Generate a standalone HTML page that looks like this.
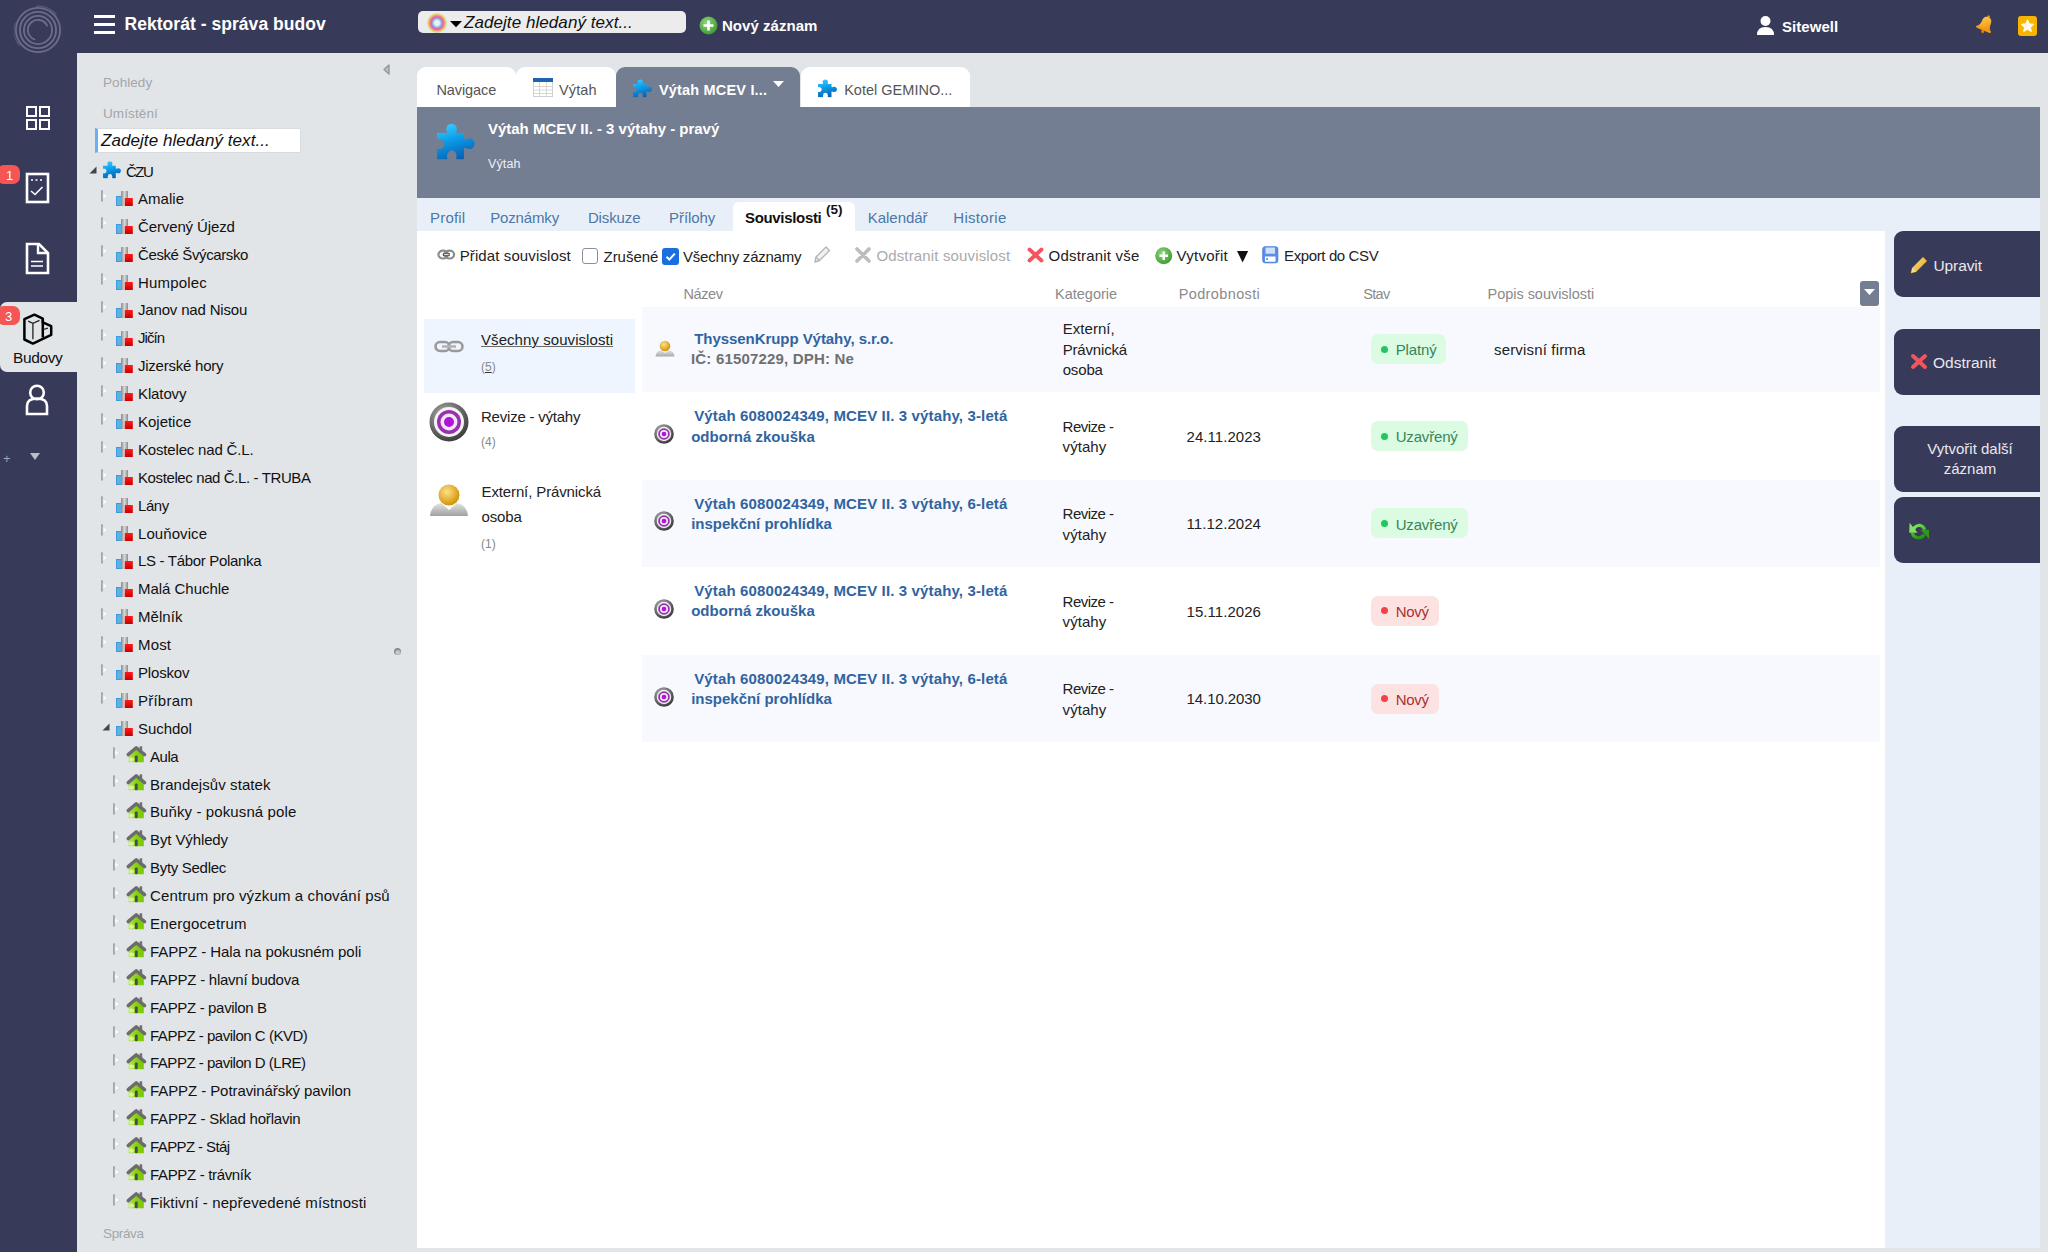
<!DOCTYPE html>
<html><head><meta charset="utf-8"><title>Rektorát - správa budov</title>
<style>
html,body{margin:0;padding:0;}
body{width:2048px;height:1252px;overflow:hidden;position:relative;font-family:"Liberation Sans", sans-serif;background:#e1e5e8;}
.b{position:absolute;}
.t{position:absolute;white-space:nowrap;line-height:1;font-family:"Liberation Sans", sans-serif;}
svg.b{overflow:visible;}
</style></head><body>
<div class="b" style="left:0px;top:0px;width:2048px;height:53px;background:#383a5a;"></div>
<div class="b" style="left:0px;top:53px;width:77px;height:1199px;background:#383a5a;"></div>
<div class="b" style="left:77px;top:53px;width:1971px;height:1199px;background:#e1e5e8;"></div>
<svg class="b" style="left:0px;top:0px;" width="76" height="53" viewBox="0 0 76 53"><circle cx="38" cy="30" r="22.1" fill="none" stroke="#6b6d8b" stroke-width="1.8"/><circle cx="38" cy="30" r="18.1" fill="none" stroke="#6b6d8b" stroke-width="1.8"/><circle cx="38" cy="30" r="14.1" fill="none" stroke="#6b6d8b" stroke-width="1.8"/><path d="M34.55 39.49 A10.1 10.1 0 1 1 47.15 25.73" fill="none" stroke="#6b6d8b" stroke-width="1.8" stroke-linecap="round"/><path d="M35.88 6.29 A24.3 24.3 0 0 1 56.61 14.88" fill="none" stroke="#6b6d8b" stroke-width="1.2" opacity="0.6"/><path d="M19.61 45.93 A24 24 0 0 1 15.45 22.29" fill="none" stroke="#6b6d8b" stroke-width="1.2" opacity="0.5"/></svg>
<div class="b" style="left:94px;top:15px;width:21px;height:3px;background:#fff;"></div>
<div class="b" style="left:94px;top:23px;width:21px;height:3px;background:#fff;"></div>
<div class="b" style="left:94px;top:31px;width:21px;height:3px;background:#fff;"></div>
<div class="t" style="left:124.5px;top:16.39px;font-size:17.5px;color:#fff;font-weight:bold;font-style:normal;letter-spacing:0.041px;">Rektorát - správa budov</div>
<div class="b" style="left:418px;top:11px;width:268px;height:22px;background:#ececec;border-radius:5px"></div>
<svg class="b" style="left:426px;top:12px;" width="22" height="22" viewBox="0 0 22 22"><defs><radialGradient id="rg" cx="11" cy="11" r="10.2" gradientUnits="userSpaceOnUse"><stop offset="0" stop-color="#f2f0ef"/><stop offset="0.25" stop-color="#e8eef4"/><stop offset="0.42" stop-color="#7ec0ea"/><stop offset="0.58" stop-color="#e060b0"/><stop offset="0.72" stop-color="#f08888"/><stop offset="0.85" stop-color="#f2d070"/><stop offset="0.95" stop-color="#c8e6a0"/><stop offset="1" stop-color="#c8e6a0" stop-opacity="0"/></radialGradient></defs><circle cx="11" cy="11" r="10.2" fill="url(#rg)"/></svg>
<svg class="b" style="left:449.5px;top:20.5px;" width="12" height="7" viewBox="0 0 12 7"><path d="M0 0 L12 0 L6 6.2 Z" fill="#000"/></svg>
<div class="t" style="left:464px;top:13.61px;font-size:17px;color:#111;font-weight:normal;font-style:italic;letter-spacing:0.066px;">Zadejte hledaný text...</div>
<svg class="b" style="left:699px;top:16px;" width="19" height="19" viewBox="0 0 19 19"><defs><radialGradient id="gg" cx="0.4" cy="0.35" r="0.7"><stop offset="0" stop-color="#8fd67a"/><stop offset="1" stop-color="#3a9a2c"/></radialGradient></defs><circle cx="9.5" cy="9.5" r="9" fill="url(#gg)"/><path d="M9.5 4.5v10M4.5 9.5h10" stroke="#fff" stroke-width="2.6"/></svg>
<div class="t" style="left:722px;top:18.30px;font-size:15px;color:#fff;font-weight:bold;font-style:normal;letter-spacing:0.031px;">Nový záznam</div>
<svg class="b" style="left:1757px;top:16px;" width="17" height="20" viewBox="0 0 17 20"><circle cx="8.5" cy="5" r="5" fill="#fff"/><path d="M0 19 Q0 11 8.5 11 Q17 11 17 19 Z" fill="#fff"/></svg>
<div class="t" style="left:1782px;top:19.30px;font-size:15px;color:#fff;font-weight:bold;font-style:normal;letter-spacing:0.045px;">Sitewell</div>
<svg class="b" style="left:1975px;top:13px;" width="21" height="23" viewBox="0 0 21 23"><defs><linearGradient id="bl" x1="0" y1="0" x2="1" y2="1"><stop offset="0" stop-color="#ffd35a"/><stop offset="1" stop-color="#f08a00"/></linearGradient></defs><g transform="rotate(22 10.5 11.5)"><circle cx="10.5" cy="3" r="1.3" fill="#e89400"/><path d="M10.5 3.6 C6.8 3.6 5.8 6.5 5.8 9.5 C5.8 12.5 4.8 14.5 3 16.2 H18 C16.2 14.5 15.2 12.5 15.2 9.5 C15.2 6.5 14.2 3.6 10.5 3.6 Z" fill="url(#bl)"/><rect x="2.5" y="15.6" width="16" height="2.2" rx="1.1" fill="#f39a10"/><circle cx="10.5" cy="19" r="1.5" fill="#e88a00"/></g></svg>
<svg class="b" style="left:2018px;top:16px;" width="20" height="20" viewBox="0 0 20 20"><rect x="0" y="0" width="19" height="20" rx="3" fill="#f7b500"/><path d="M9.5 4.2 L11.2 8 L15.3 8.4 L12.2 11.1 L13.1 15.2 L9.5 13 L5.9 15.2 L6.8 11.1 L3.7 8.4 L7.8 8 Z" fill="#fffbe8" stroke="#fffbe8" stroke-width="1.4" stroke-linejoin="round"/></svg>
<div class="b" style="left:25.5px;top:105.5px;width:7.5px;height:7.5px;border:2px solid #fff"></div>
<div class="b" style="left:38.5px;top:105.5px;width:7.5px;height:7.5px;border:2px solid #fff"></div>
<div class="b" style="left:25.5px;top:118.5px;width:7.5px;height:7.5px;border:2px solid #fff"></div>
<div class="b" style="left:38.5px;top:118.5px;width:7.5px;height:7.5px;border:2px solid #fff"></div>
<div class="b" style="left:-3px;top:165px;width:23px;height:19px;background:#f55555;border-radius:7px"></div>
<div class="t" style="left:6px;top:169.00px;font-size:13px;color:#fff;font-weight:normal;font-style:normal;">1</div>
<svg class="b" style="left:25px;top:172px;" width="26" height="33" viewBox="0 0 26 33"><rect x="2" y="2" width="21" height="28" fill="none" stroke="#fff" stroke-width="2.6"/><path d="M6 8h2M10.5 8h2M15 8h2" stroke="#fff" stroke-width="1.5"/><path d="M6 19 L10 22.5 L17.5 15" fill="none" stroke="#fff" stroke-width="1.6"/></svg>
<svg class="b" style="left:25px;top:242px;" width="26" height="34" viewBox="0 0 26 34"><path d="M2 2 H14 L23 11 V31 H2 Z" fill="none" stroke="#fff" stroke-width="2.6" stroke-linejoin="miter"/><path d="M13 3 V11 H22" fill="none" stroke="#fff" stroke-width="2.4"/><path d="M6 19.5 H18 M6 24 H18" stroke="#fff" stroke-width="1.4"/></svg>
<div class="b" style="left:0px;top:302px;width:77px;height:70px;background:#e1e5e8;border-radius:7px 0 0 7px"></div>
<div class="b" style="left:-3px;top:306px;width:23px;height:19px;background:#f55555;border-radius:7px"></div>
<div class="t" style="left:5px;top:310.00px;font-size:13px;color:#fff;font-weight:normal;font-style:normal;">3</div>
<svg class="b" style="left:18px;top:308px;" width="40" height="42" viewBox="0 0 40 42"><path d="M16.4 6.7 L6.4 11.1 V31.5 L14.9 35.6 L33.2 26.8 V18.1 L24.8 14.4 V10.7 Z" fill="none" stroke="#000" stroke-width="2.5" stroke-linejoin="round"/><path d="M24.8 10.7 V29.5" stroke="#000" stroke-width="2.5"/><path d="M10.1 13.1 L14.9 15.4 L21.5 12.4 M14.9 15.4 V31.2 M25.5 21.5 L29.9 20.1" fill="none" stroke="#222" stroke-width="1.3"/></svg>
<div class="t" style="left:13px;top:349.88px;font-size:15.5px;color:#111;font-weight:normal;font-style:normal;letter-spacing:-0.390px;">Budovy</div>
<svg class="b" style="left:25px;top:384px;" width="25" height="32" viewBox="0 0 25 32"><circle cx="12" cy="8.5" r="6.8" fill="none" stroke="#fff" stroke-width="2.6"/><path d="M2 30 V22 Q2 14.5 12 14.5 Q22 14.5 22 22 V30 Z" fill="none" stroke="#fff" stroke-width="2.6"/></svg>
<div class="t" style="left:3px;top:452.00px;font-size:13px;color:#9aa;font-weight:normal;font-style:normal;">+</div>
<svg class="b" style="left:30px;top:453px;" width="11" height="8" viewBox="0 0 11 8"><path d="M0 0 H10 L5 7 Z" fill="#b8c0c4"/></svg>
<svg class="b" style="left:383px;top:64px;" width="7" height="11" viewBox="0 0 7 11"><path d="M6 1 L1 5.5 L6 10 Z" fill="#b9c1c4" stroke="#8f9599" stroke-width="1.3" stroke-linejoin="round"/></svg>
<div class="t" style="left:103px;top:75.87px;font-size:13.5px;color:#a3a6a8;font-weight:normal;font-style:normal;letter-spacing:0.061px;">Pohledy</div>
<div class="t" style="left:103px;top:106.57px;font-size:13.5px;color:#a3a6a8;font-weight:normal;font-style:normal;letter-spacing:0.105px;">Umístění</div>
<div class="b" style="left:95px;top:128px;width:206px;height:25px;background:#fff;box-sizing:border-box;border:1px solid #d8dcdf;border-left:3px solid #6ab0f0"></div>
<div class="t" style="left:101px;top:132.11px;font-size:17px;color:#111;font-weight:normal;font-style:italic;letter-spacing:0.066px;">Zadejte hledaný text...</div>
<svg class="b" style="left:299px;top:398px;display:none" width="7" height="7" viewBox="0 0 7 7"><circle cx="3.5" cy="3.5" r="3.5" fill="#8a8c8c"/></svg>
<div class="b" style="left:394px;top:647.5px;width:7px;height:7px;border-radius:50%;background:radial-gradient(circle at 55% 65%, #c8caca 0 25%, #828484 60%)"></div>
<svg class="b" style="left:89px;top:165.5px;" width="8" height="8" viewBox="0 0 8 8"><path d="M7.5 0.5 V7.5 H0.5 Z" fill="#444"/></svg>
<svg class="b" style="left:103px;top:160.5px;" width="18" height="18" viewBox="0 0 37.5 36"><defs><linearGradient id="pzgczu" gradientUnits="userSpaceOnUse" x1="8" y1="2" x2="18" y2="36"><stop offset="0" stop-color="#36c6ff"/><stop offset="0.45" stop-color="#0a9ae6"/><stop offset="1" stop-color="#0a5fb0"/></linearGradient><mask id="pzmczu"><rect x="-2" y="-2" width="42" height="40" fill="#fff"/><circle cx="2.6" cy="20.2" r="4.7" fill="#000"/><rect x="-2" y="15.5" width="4.6" height="9.4" fill="#000"/><circle cx="14.6" cy="31" r="4.5" fill="#000"/><rect x="10.1" y="31" width="9" height="6" fill="#000"/></mask></defs><g mask="url(#pzmczu)" fill="url(#pzgczu)"><rect x="0" y="9" width="26.6" height="26"/><circle cx="14.4" cy="5.3" r="5.3"/><rect x="10.4" y="6" width="8" height="4"/><circle cx="31.9" cy="19.6" r="5.3"/><rect x="25" y="15.2" width="4" height="8.8"/></g></svg>
<div class="t" style="left:126px;top:164.00px;font-size:15px;color:#111;font-weight:normal;font-style:normal;letter-spacing:-1.498px;">ČZU</div>
<svg class="b" style="left:101px;top:189.6px;" width="8" height="12" viewBox="0 0 8 12"><rect x="0" y="0.3" width="1.9" height="11.2" fill="#a3a5a6"/><path d="M2 2.6 L6.8 5.9 L2 9.2 Z" fill="#fbfbfb" stroke="#d0d3d5" stroke-width="0.6" stroke-linejoin="round"/></svg>
<svg class="b" style="left:116px;top:191.1px;" width="17" height="15" viewBox="0 0 17 15"><defs><linearGradient id="gb" x1="0" x2="1"><stop offset="0" stop-color="#8a8a8a"/><stop offset="0.5" stop-color="#d8d8d8"/><stop offset="1" stop-color="#8a8a8a"/></linearGradient><linearGradient id="rb" x1="0" y1="0" x2="0" y2="1"><stop offset="0" stop-color="#ff1a1a"/><stop offset="1" stop-color="#c80000"/></linearGradient></defs><rect x="0" y="5" width="6" height="10" fill="#3d9be0"/><rect x="1" y="6" width="4" height="8" fill="#5fb0e0"/><rect x="5" y="0" width="7" height="15" fill="url(#gb)"/><rect x="8.8" y="7" width="8" height="8" fill="url(#rb)"/></svg>
<div class="t" style="left:138px;top:190.90px;font-size:15px;color:#111;font-weight:normal;font-style:normal;letter-spacing:0.039px;">Amalie</div>
<svg class="b" style="left:101px;top:217.49px;" width="8" height="12" viewBox="0 0 8 12"><rect x="0" y="0.3" width="1.9" height="11.2" fill="#a3a5a6"/><path d="M2 2.6 L6.8 5.9 L2 9.2 Z" fill="#fbfbfb" stroke="#d0d3d5" stroke-width="0.6" stroke-linejoin="round"/></svg>
<svg class="b" style="left:116px;top:218.99px;" width="17" height="15" viewBox="0 0 17 15"><defs><linearGradient id="gb" x1="0" x2="1"><stop offset="0" stop-color="#8a8a8a"/><stop offset="0.5" stop-color="#d8d8d8"/><stop offset="1" stop-color="#8a8a8a"/></linearGradient><linearGradient id="rb" x1="0" y1="0" x2="0" y2="1"><stop offset="0" stop-color="#ff1a1a"/><stop offset="1" stop-color="#c80000"/></linearGradient></defs><rect x="0" y="5" width="6" height="10" fill="#3d9be0"/><rect x="1" y="6" width="4" height="8" fill="#5fb0e0"/><rect x="5" y="0" width="7" height="15" fill="url(#gb)"/><rect x="8.8" y="7" width="8" height="8" fill="url(#rb)"/></svg>
<div class="t" style="left:138px;top:218.79px;font-size:15px;color:#111;font-weight:normal;font-style:normal;letter-spacing:-0.127px;">Červený Újezd</div>
<svg class="b" style="left:101px;top:245.38px;" width="8" height="12" viewBox="0 0 8 12"><rect x="0" y="0.3" width="1.9" height="11.2" fill="#a3a5a6"/><path d="M2 2.6 L6.8 5.9 L2 9.2 Z" fill="#fbfbfb" stroke="#d0d3d5" stroke-width="0.6" stroke-linejoin="round"/></svg>
<svg class="b" style="left:116px;top:246.88px;" width="17" height="15" viewBox="0 0 17 15"><defs><linearGradient id="gb" x1="0" x2="1"><stop offset="0" stop-color="#8a8a8a"/><stop offset="0.5" stop-color="#d8d8d8"/><stop offset="1" stop-color="#8a8a8a"/></linearGradient><linearGradient id="rb" x1="0" y1="0" x2="0" y2="1"><stop offset="0" stop-color="#ff1a1a"/><stop offset="1" stop-color="#c80000"/></linearGradient></defs><rect x="0" y="5" width="6" height="10" fill="#3d9be0"/><rect x="1" y="6" width="4" height="8" fill="#5fb0e0"/><rect x="5" y="0" width="7" height="15" fill="url(#gb)"/><rect x="8.8" y="7" width="8" height="8" fill="url(#rb)"/></svg>
<div class="t" style="left:138px;top:246.68px;font-size:15px;color:#111;font-weight:normal;font-style:normal;letter-spacing:-0.388px;">České Švýcarsko</div>
<svg class="b" style="left:101px;top:273.27px;" width="8" height="12" viewBox="0 0 8 12"><rect x="0" y="0.3" width="1.9" height="11.2" fill="#a3a5a6"/><path d="M2 2.6 L6.8 5.9 L2 9.2 Z" fill="#fbfbfb" stroke="#d0d3d5" stroke-width="0.6" stroke-linejoin="round"/></svg>
<svg class="b" style="left:116px;top:274.77px;" width="17" height="15" viewBox="0 0 17 15"><defs><linearGradient id="gb" x1="0" x2="1"><stop offset="0" stop-color="#8a8a8a"/><stop offset="0.5" stop-color="#d8d8d8"/><stop offset="1" stop-color="#8a8a8a"/></linearGradient><linearGradient id="rb" x1="0" y1="0" x2="0" y2="1"><stop offset="0" stop-color="#ff1a1a"/><stop offset="1" stop-color="#c80000"/></linearGradient></defs><rect x="0" y="5" width="6" height="10" fill="#3d9be0"/><rect x="1" y="6" width="4" height="8" fill="#5fb0e0"/><rect x="5" y="0" width="7" height="15" fill="url(#gb)"/><rect x="8.8" y="7" width="8" height="8" fill="url(#rb)"/></svg>
<div class="t" style="left:138px;top:274.57px;font-size:15px;color:#111;font-weight:normal;font-style:normal;letter-spacing:0.167px;">Humpolec</div>
<svg class="b" style="left:101px;top:301.15999999999997px;" width="8" height="12" viewBox="0 0 8 12"><rect x="0" y="0.3" width="1.9" height="11.2" fill="#a3a5a6"/><path d="M2 2.6 L6.8 5.9 L2 9.2 Z" fill="#fbfbfb" stroke="#d0d3d5" stroke-width="0.6" stroke-linejoin="round"/></svg>
<svg class="b" style="left:116px;top:302.65999999999997px;" width="17" height="15" viewBox="0 0 17 15"><defs><linearGradient id="gb" x1="0" x2="1"><stop offset="0" stop-color="#8a8a8a"/><stop offset="0.5" stop-color="#d8d8d8"/><stop offset="1" stop-color="#8a8a8a"/></linearGradient><linearGradient id="rb" x1="0" y1="0" x2="0" y2="1"><stop offset="0" stop-color="#ff1a1a"/><stop offset="1" stop-color="#c80000"/></linearGradient></defs><rect x="0" y="5" width="6" height="10" fill="#3d9be0"/><rect x="1" y="6" width="4" height="8" fill="#5fb0e0"/><rect x="5" y="0" width="7" height="15" fill="url(#gb)"/><rect x="8.8" y="7" width="8" height="8" fill="url(#rb)"/></svg>
<div class="t" style="left:138px;top:302.46px;font-size:15px;color:#111;font-weight:normal;font-style:normal;letter-spacing:-0.171px;">Janov nad Nisou</div>
<svg class="b" style="left:101px;top:329.04999999999995px;" width="8" height="12" viewBox="0 0 8 12"><rect x="0" y="0.3" width="1.9" height="11.2" fill="#a3a5a6"/><path d="M2 2.6 L6.8 5.9 L2 9.2 Z" fill="#fbfbfb" stroke="#d0d3d5" stroke-width="0.6" stroke-linejoin="round"/></svg>
<svg class="b" style="left:116px;top:330.54999999999995px;" width="17" height="15" viewBox="0 0 17 15"><defs><linearGradient id="gb" x1="0" x2="1"><stop offset="0" stop-color="#8a8a8a"/><stop offset="0.5" stop-color="#d8d8d8"/><stop offset="1" stop-color="#8a8a8a"/></linearGradient><linearGradient id="rb" x1="0" y1="0" x2="0" y2="1"><stop offset="0" stop-color="#ff1a1a"/><stop offset="1" stop-color="#c80000"/></linearGradient></defs><rect x="0" y="5" width="6" height="10" fill="#3d9be0"/><rect x="1" y="6" width="4" height="8" fill="#5fb0e0"/><rect x="5" y="0" width="7" height="15" fill="url(#gb)"/><rect x="8.8" y="7" width="8" height="8" fill="url(#rb)"/></svg>
<div class="t" style="left:138px;top:330.35px;font-size:15px;color:#111;font-weight:normal;font-style:normal;letter-spacing:-0.950px;">Jičín</div>
<svg class="b" style="left:101px;top:356.94px;" width="8" height="12" viewBox="0 0 8 12"><rect x="0" y="0.3" width="1.9" height="11.2" fill="#a3a5a6"/><path d="M2 2.6 L6.8 5.9 L2 9.2 Z" fill="#fbfbfb" stroke="#d0d3d5" stroke-width="0.6" stroke-linejoin="round"/></svg>
<svg class="b" style="left:116px;top:358.44px;" width="17" height="15" viewBox="0 0 17 15"><defs><linearGradient id="gb" x1="0" x2="1"><stop offset="0" stop-color="#8a8a8a"/><stop offset="0.5" stop-color="#d8d8d8"/><stop offset="1" stop-color="#8a8a8a"/></linearGradient><linearGradient id="rb" x1="0" y1="0" x2="0" y2="1"><stop offset="0" stop-color="#ff1a1a"/><stop offset="1" stop-color="#c80000"/></linearGradient></defs><rect x="0" y="5" width="6" height="10" fill="#3d9be0"/><rect x="1" y="6" width="4" height="8" fill="#5fb0e0"/><rect x="5" y="0" width="7" height="15" fill="url(#gb)"/><rect x="8.8" y="7" width="8" height="8" fill="url(#rb)"/></svg>
<div class="t" style="left:138px;top:358.24px;font-size:15px;color:#111;font-weight:normal;font-style:normal;letter-spacing:-0.238px;">Jizerské hory</div>
<svg class="b" style="left:101px;top:384.83000000000004px;" width="8" height="12" viewBox="0 0 8 12"><rect x="0" y="0.3" width="1.9" height="11.2" fill="#a3a5a6"/><path d="M2 2.6 L6.8 5.9 L2 9.2 Z" fill="#fbfbfb" stroke="#d0d3d5" stroke-width="0.6" stroke-linejoin="round"/></svg>
<svg class="b" style="left:116px;top:386.33000000000004px;" width="17" height="15" viewBox="0 0 17 15"><defs><linearGradient id="gb" x1="0" x2="1"><stop offset="0" stop-color="#8a8a8a"/><stop offset="0.5" stop-color="#d8d8d8"/><stop offset="1" stop-color="#8a8a8a"/></linearGradient><linearGradient id="rb" x1="0" y1="0" x2="0" y2="1"><stop offset="0" stop-color="#ff1a1a"/><stop offset="1" stop-color="#c80000"/></linearGradient></defs><rect x="0" y="5" width="6" height="10" fill="#3d9be0"/><rect x="1" y="6" width="4" height="8" fill="#5fb0e0"/><rect x="5" y="0" width="7" height="15" fill="url(#gb)"/><rect x="8.8" y="7" width="8" height="8" fill="url(#rb)"/></svg>
<div class="t" style="left:138px;top:386.13px;font-size:15px;color:#111;font-weight:normal;font-style:normal;letter-spacing:-0.115px;">Klatovy</div>
<svg class="b" style="left:101px;top:412.72px;" width="8" height="12" viewBox="0 0 8 12"><rect x="0" y="0.3" width="1.9" height="11.2" fill="#a3a5a6"/><path d="M2 2.6 L6.8 5.9 L2 9.2 Z" fill="#fbfbfb" stroke="#d0d3d5" stroke-width="0.6" stroke-linejoin="round"/></svg>
<svg class="b" style="left:116px;top:414.22px;" width="17" height="15" viewBox="0 0 17 15"><defs><linearGradient id="gb" x1="0" x2="1"><stop offset="0" stop-color="#8a8a8a"/><stop offset="0.5" stop-color="#d8d8d8"/><stop offset="1" stop-color="#8a8a8a"/></linearGradient><linearGradient id="rb" x1="0" y1="0" x2="0" y2="1"><stop offset="0" stop-color="#ff1a1a"/><stop offset="1" stop-color="#c80000"/></linearGradient></defs><rect x="0" y="5" width="6" height="10" fill="#3d9be0"/><rect x="1" y="6" width="4" height="8" fill="#5fb0e0"/><rect x="5" y="0" width="7" height="15" fill="url(#gb)"/><rect x="8.8" y="7" width="8" height="8" fill="url(#rb)"/></svg>
<div class="t" style="left:138px;top:414.02px;font-size:15px;color:#111;font-weight:normal;font-style:normal;letter-spacing:-0.017px;">Kojetice</div>
<svg class="b" style="left:101px;top:440.61px;" width="8" height="12" viewBox="0 0 8 12"><rect x="0" y="0.3" width="1.9" height="11.2" fill="#a3a5a6"/><path d="M2 2.6 L6.8 5.9 L2 9.2 Z" fill="#fbfbfb" stroke="#d0d3d5" stroke-width="0.6" stroke-linejoin="round"/></svg>
<svg class="b" style="left:116px;top:442.11px;" width="17" height="15" viewBox="0 0 17 15"><defs><linearGradient id="gb" x1="0" x2="1"><stop offset="0" stop-color="#8a8a8a"/><stop offset="0.5" stop-color="#d8d8d8"/><stop offset="1" stop-color="#8a8a8a"/></linearGradient><linearGradient id="rb" x1="0" y1="0" x2="0" y2="1"><stop offset="0" stop-color="#ff1a1a"/><stop offset="1" stop-color="#c80000"/></linearGradient></defs><rect x="0" y="5" width="6" height="10" fill="#3d9be0"/><rect x="1" y="6" width="4" height="8" fill="#5fb0e0"/><rect x="5" y="0" width="7" height="15" fill="url(#gb)"/><rect x="8.8" y="7" width="8" height="8" fill="url(#rb)"/></svg>
<div class="t" style="left:138px;top:441.91px;font-size:15px;color:#111;font-weight:normal;font-style:normal;letter-spacing:-0.177px;">Kostelec nad Č.L.</div>
<svg class="b" style="left:101px;top:468.5px;" width="8" height="12" viewBox="0 0 8 12"><rect x="0" y="0.3" width="1.9" height="11.2" fill="#a3a5a6"/><path d="M2 2.6 L6.8 5.9 L2 9.2 Z" fill="#fbfbfb" stroke="#d0d3d5" stroke-width="0.6" stroke-linejoin="round"/></svg>
<svg class="b" style="left:116px;top:470.0px;" width="17" height="15" viewBox="0 0 17 15"><defs><linearGradient id="gb" x1="0" x2="1"><stop offset="0" stop-color="#8a8a8a"/><stop offset="0.5" stop-color="#d8d8d8"/><stop offset="1" stop-color="#8a8a8a"/></linearGradient><linearGradient id="rb" x1="0" y1="0" x2="0" y2="1"><stop offset="0" stop-color="#ff1a1a"/><stop offset="1" stop-color="#c80000"/></linearGradient></defs><rect x="0" y="5" width="6" height="10" fill="#3d9be0"/><rect x="1" y="6" width="4" height="8" fill="#5fb0e0"/><rect x="5" y="0" width="7" height="15" fill="url(#gb)"/><rect x="8.8" y="7" width="8" height="8" fill="url(#rb)"/></svg>
<div class="t" style="left:138px;top:469.80px;font-size:15px;color:#111;font-weight:normal;font-style:normal;letter-spacing:-0.390px;">Kostelec nad Č.L. - TRUBA</div>
<svg class="b" style="left:101px;top:496.39px;" width="8" height="12" viewBox="0 0 8 12"><rect x="0" y="0.3" width="1.9" height="11.2" fill="#a3a5a6"/><path d="M2 2.6 L6.8 5.9 L2 9.2 Z" fill="#fbfbfb" stroke="#d0d3d5" stroke-width="0.6" stroke-linejoin="round"/></svg>
<svg class="b" style="left:116px;top:497.89px;" width="17" height="15" viewBox="0 0 17 15"><defs><linearGradient id="gb" x1="0" x2="1"><stop offset="0" stop-color="#8a8a8a"/><stop offset="0.5" stop-color="#d8d8d8"/><stop offset="1" stop-color="#8a8a8a"/></linearGradient><linearGradient id="rb" x1="0" y1="0" x2="0" y2="1"><stop offset="0" stop-color="#ff1a1a"/><stop offset="1" stop-color="#c80000"/></linearGradient></defs><rect x="0" y="5" width="6" height="10" fill="#3d9be0"/><rect x="1" y="6" width="4" height="8" fill="#5fb0e0"/><rect x="5" y="0" width="7" height="15" fill="url(#gb)"/><rect x="8.8" y="7" width="8" height="8" fill="url(#rb)"/></svg>
<div class="t" style="left:138px;top:497.69px;font-size:15px;color:#111;font-weight:normal;font-style:normal;letter-spacing:-0.409px;">Lány</div>
<svg class="b" style="left:101px;top:524.28px;" width="8" height="12" viewBox="0 0 8 12"><rect x="0" y="0.3" width="1.9" height="11.2" fill="#a3a5a6"/><path d="M2 2.6 L6.8 5.9 L2 9.2 Z" fill="#fbfbfb" stroke="#d0d3d5" stroke-width="0.6" stroke-linejoin="round"/></svg>
<svg class="b" style="left:116px;top:525.78px;" width="17" height="15" viewBox="0 0 17 15"><defs><linearGradient id="gb" x1="0" x2="1"><stop offset="0" stop-color="#8a8a8a"/><stop offset="0.5" stop-color="#d8d8d8"/><stop offset="1" stop-color="#8a8a8a"/></linearGradient><linearGradient id="rb" x1="0" y1="0" x2="0" y2="1"><stop offset="0" stop-color="#ff1a1a"/><stop offset="1" stop-color="#c80000"/></linearGradient></defs><rect x="0" y="5" width="6" height="10" fill="#3d9be0"/><rect x="1" y="6" width="4" height="8" fill="#5fb0e0"/><rect x="5" y="0" width="7" height="15" fill="url(#gb)"/><rect x="8.8" y="7" width="8" height="8" fill="url(#rb)"/></svg>
<div class="t" style="left:138px;top:525.58px;font-size:15px;color:#111;font-weight:normal;font-style:normal;letter-spacing:0.082px;">Louňovice</div>
<svg class="b" style="left:101px;top:552.17px;" width="8" height="12" viewBox="0 0 8 12"><rect x="0" y="0.3" width="1.9" height="11.2" fill="#a3a5a6"/><path d="M2 2.6 L6.8 5.9 L2 9.2 Z" fill="#fbfbfb" stroke="#d0d3d5" stroke-width="0.6" stroke-linejoin="round"/></svg>
<svg class="b" style="left:116px;top:553.67px;" width="17" height="15" viewBox="0 0 17 15"><defs><linearGradient id="gb" x1="0" x2="1"><stop offset="0" stop-color="#8a8a8a"/><stop offset="0.5" stop-color="#d8d8d8"/><stop offset="1" stop-color="#8a8a8a"/></linearGradient><linearGradient id="rb" x1="0" y1="0" x2="0" y2="1"><stop offset="0" stop-color="#ff1a1a"/><stop offset="1" stop-color="#c80000"/></linearGradient></defs><rect x="0" y="5" width="6" height="10" fill="#3d9be0"/><rect x="1" y="6" width="4" height="8" fill="#5fb0e0"/><rect x="5" y="0" width="7" height="15" fill="url(#gb)"/><rect x="8.8" y="7" width="8" height="8" fill="url(#rb)"/></svg>
<div class="t" style="left:138px;top:553.47px;font-size:15px;color:#111;font-weight:normal;font-style:normal;letter-spacing:-0.323px;">LS - Tábor Polanka</div>
<svg class="b" style="left:101px;top:580.0600000000001px;" width="8" height="12" viewBox="0 0 8 12"><rect x="0" y="0.3" width="1.9" height="11.2" fill="#a3a5a6"/><path d="M2 2.6 L6.8 5.9 L2 9.2 Z" fill="#fbfbfb" stroke="#d0d3d5" stroke-width="0.6" stroke-linejoin="round"/></svg>
<svg class="b" style="left:116px;top:581.5600000000001px;" width="17" height="15" viewBox="0 0 17 15"><defs><linearGradient id="gb" x1="0" x2="1"><stop offset="0" stop-color="#8a8a8a"/><stop offset="0.5" stop-color="#d8d8d8"/><stop offset="1" stop-color="#8a8a8a"/></linearGradient><linearGradient id="rb" x1="0" y1="0" x2="0" y2="1"><stop offset="0" stop-color="#ff1a1a"/><stop offset="1" stop-color="#c80000"/></linearGradient></defs><rect x="0" y="5" width="6" height="10" fill="#3d9be0"/><rect x="1" y="6" width="4" height="8" fill="#5fb0e0"/><rect x="5" y="0" width="7" height="15" fill="url(#gb)"/><rect x="8.8" y="7" width="8" height="8" fill="url(#rb)"/></svg>
<div class="t" style="left:138px;top:581.36px;font-size:15px;color:#111;font-weight:normal;font-style:normal;letter-spacing:-0.025px;">Malá Chuchle</div>
<svg class="b" style="left:101px;top:607.95px;" width="8" height="12" viewBox="0 0 8 12"><rect x="0" y="0.3" width="1.9" height="11.2" fill="#a3a5a6"/><path d="M2 2.6 L6.8 5.9 L2 9.2 Z" fill="#fbfbfb" stroke="#d0d3d5" stroke-width="0.6" stroke-linejoin="round"/></svg>
<svg class="b" style="left:116px;top:609.45px;" width="17" height="15" viewBox="0 0 17 15"><defs><linearGradient id="gb" x1="0" x2="1"><stop offset="0" stop-color="#8a8a8a"/><stop offset="0.5" stop-color="#d8d8d8"/><stop offset="1" stop-color="#8a8a8a"/></linearGradient><linearGradient id="rb" x1="0" y1="0" x2="0" y2="1"><stop offset="0" stop-color="#ff1a1a"/><stop offset="1" stop-color="#c80000"/></linearGradient></defs><rect x="0" y="5" width="6" height="10" fill="#3d9be0"/><rect x="1" y="6" width="4" height="8" fill="#5fb0e0"/><rect x="5" y="0" width="7" height="15" fill="url(#gb)"/><rect x="8.8" y="7" width="8" height="8" fill="url(#rb)"/></svg>
<div class="t" style="left:138px;top:609.25px;font-size:15px;color:#111;font-weight:normal;font-style:normal;letter-spacing:0.064px;">Mělník</div>
<svg class="b" style="left:101px;top:635.84px;" width="8" height="12" viewBox="0 0 8 12"><rect x="0" y="0.3" width="1.9" height="11.2" fill="#a3a5a6"/><path d="M2 2.6 L6.8 5.9 L2 9.2 Z" fill="#fbfbfb" stroke="#d0d3d5" stroke-width="0.6" stroke-linejoin="round"/></svg>
<svg class="b" style="left:116px;top:637.34px;" width="17" height="15" viewBox="0 0 17 15"><defs><linearGradient id="gb" x1="0" x2="1"><stop offset="0" stop-color="#8a8a8a"/><stop offset="0.5" stop-color="#d8d8d8"/><stop offset="1" stop-color="#8a8a8a"/></linearGradient><linearGradient id="rb" x1="0" y1="0" x2="0" y2="1"><stop offset="0" stop-color="#ff1a1a"/><stop offset="1" stop-color="#c80000"/></linearGradient></defs><rect x="0" y="5" width="6" height="10" fill="#3d9be0"/><rect x="1" y="6" width="4" height="8" fill="#5fb0e0"/><rect x="5" y="0" width="7" height="15" fill="url(#gb)"/><rect x="8.8" y="7" width="8" height="8" fill="url(#rb)"/></svg>
<div class="t" style="left:138px;top:637.14px;font-size:15px;color:#111;font-weight:normal;font-style:normal;letter-spacing:0.154px;">Most</div>
<svg class="b" style="left:101px;top:663.73px;" width="8" height="12" viewBox="0 0 8 12"><rect x="0" y="0.3" width="1.9" height="11.2" fill="#a3a5a6"/><path d="M2 2.6 L6.8 5.9 L2 9.2 Z" fill="#fbfbfb" stroke="#d0d3d5" stroke-width="0.6" stroke-linejoin="round"/></svg>
<svg class="b" style="left:116px;top:665.23px;" width="17" height="15" viewBox="0 0 17 15"><defs><linearGradient id="gb" x1="0" x2="1"><stop offset="0" stop-color="#8a8a8a"/><stop offset="0.5" stop-color="#d8d8d8"/><stop offset="1" stop-color="#8a8a8a"/></linearGradient><linearGradient id="rb" x1="0" y1="0" x2="0" y2="1"><stop offset="0" stop-color="#ff1a1a"/><stop offset="1" stop-color="#c80000"/></linearGradient></defs><rect x="0" y="5" width="6" height="10" fill="#3d9be0"/><rect x="1" y="6" width="4" height="8" fill="#5fb0e0"/><rect x="5" y="0" width="7" height="15" fill="url(#gb)"/><rect x="8.8" y="7" width="8" height="8" fill="url(#rb)"/></svg>
<div class="t" style="left:138px;top:665.03px;font-size:15px;color:#111;font-weight:normal;font-style:normal;letter-spacing:-0.170px;">Ploskov</div>
<svg class="b" style="left:101px;top:691.62px;" width="8" height="12" viewBox="0 0 8 12"><rect x="0" y="0.3" width="1.9" height="11.2" fill="#a3a5a6"/><path d="M2 2.6 L6.8 5.9 L2 9.2 Z" fill="#fbfbfb" stroke="#d0d3d5" stroke-width="0.6" stroke-linejoin="round"/></svg>
<svg class="b" style="left:116px;top:693.12px;" width="17" height="15" viewBox="0 0 17 15"><defs><linearGradient id="gb" x1="0" x2="1"><stop offset="0" stop-color="#8a8a8a"/><stop offset="0.5" stop-color="#d8d8d8"/><stop offset="1" stop-color="#8a8a8a"/></linearGradient><linearGradient id="rb" x1="0" y1="0" x2="0" y2="1"><stop offset="0" stop-color="#ff1a1a"/><stop offset="1" stop-color="#c80000"/></linearGradient></defs><rect x="0" y="5" width="6" height="10" fill="#3d9be0"/><rect x="1" y="6" width="4" height="8" fill="#5fb0e0"/><rect x="5" y="0" width="7" height="15" fill="url(#gb)"/><rect x="8.8" y="7" width="8" height="8" fill="url(#rb)"/></svg>
<div class="t" style="left:138px;top:692.92px;font-size:15px;color:#111;font-weight:normal;font-style:normal;letter-spacing:0.225px;">Příbram</div>
<svg class="b" style="left:101.5px;top:722.51px;" width="8" height="8" viewBox="0 0 8 8"><path d="M7.5 0.5 V7.5 H0.5 Z" fill="#444"/></svg>
<svg class="b" style="left:116px;top:721.01px;" width="17" height="15" viewBox="0 0 17 15"><defs><linearGradient id="gb" x1="0" x2="1"><stop offset="0" stop-color="#8a8a8a"/><stop offset="0.5" stop-color="#d8d8d8"/><stop offset="1" stop-color="#8a8a8a"/></linearGradient><linearGradient id="rb" x1="0" y1="0" x2="0" y2="1"><stop offset="0" stop-color="#ff1a1a"/><stop offset="1" stop-color="#c80000"/></linearGradient></defs><rect x="0" y="5" width="6" height="10" fill="#3d9be0"/><rect x="1" y="6" width="4" height="8" fill="#5fb0e0"/><rect x="5" y="0" width="7" height="15" fill="url(#gb)"/><rect x="8.8" y="7" width="8" height="8" fill="url(#rb)"/></svg>
<div class="t" style="left:138px;top:720.81px;font-size:15px;color:#111;font-weight:normal;font-style:normal;letter-spacing:-0.062px;">Suchdol</div>
<svg class="b" style="left:113px;top:747.4px;" width="8" height="12" viewBox="0 0 8 12"><rect x="0" y="0.3" width="1.9" height="11.2" fill="#a3a5a6"/><path d="M2 2.6 L6.8 5.9 L2 9.2 Z" fill="#fbfbfb" stroke="#d0d3d5" stroke-width="0.6" stroke-linejoin="round"/></svg>
<svg class="b" style="left:127px;top:746.1px;" width="19" height="17" viewBox="0 0 19 17"><defs><linearGradient id="hg" x1="0" y1="0" x2="1" y2="0"><stop offset="0" stop-color="#b8e860"/><stop offset="0.5" stop-color="#86d010"/><stop offset="1" stop-color="#78c800"/></linearGradient></defs><rect x="12.6" y="0.2" width="2.6" height="5.5" rx="0.6" fill="#707070"/><path d="M1.6 8.8 L9.2 2.6 L16.8 8.8 V16.2 H1.6 Z" fill="url(#hg)"/><ellipse cx="4.6" cy="13.6" rx="2.6" ry="2.2" fill="#e4f8b0" opacity="0.8"/><path d="M1.2 8.6 L9.2 1.8 L17.6 8.6" fill="none" stroke="#6c6c6c" stroke-width="3.4" stroke-linejoin="round" stroke-linecap="round"/><rect x="7.9" y="9.6" width="2.8" height="6.6" rx="1.2" fill="#4a4a4a"/></svg>
<div class="t" style="left:150px;top:748.70px;font-size:15px;color:#111;font-weight:normal;font-style:normal;letter-spacing:-0.460px;">Aula</div>
<svg class="b" style="left:113px;top:775.2900000000001px;" width="8" height="12" viewBox="0 0 8 12"><rect x="0" y="0.3" width="1.9" height="11.2" fill="#a3a5a6"/><path d="M2 2.6 L6.8 5.9 L2 9.2 Z" fill="#fbfbfb" stroke="#d0d3d5" stroke-width="0.6" stroke-linejoin="round"/></svg>
<svg class="b" style="left:127px;top:773.9900000000001px;" width="19" height="17" viewBox="0 0 19 17"><defs><linearGradient id="hg" x1="0" y1="0" x2="1" y2="0"><stop offset="0" stop-color="#b8e860"/><stop offset="0.5" stop-color="#86d010"/><stop offset="1" stop-color="#78c800"/></linearGradient></defs><rect x="12.6" y="0.2" width="2.6" height="5.5" rx="0.6" fill="#707070"/><path d="M1.6 8.8 L9.2 2.6 L16.8 8.8 V16.2 H1.6 Z" fill="url(#hg)"/><ellipse cx="4.6" cy="13.6" rx="2.6" ry="2.2" fill="#e4f8b0" opacity="0.8"/><path d="M1.2 8.6 L9.2 1.8 L17.6 8.6" fill="none" stroke="#6c6c6c" stroke-width="3.4" stroke-linejoin="round" stroke-linecap="round"/><rect x="7.9" y="9.6" width="2.8" height="6.6" rx="1.2" fill="#4a4a4a"/></svg>
<div class="t" style="left:150px;top:776.59px;font-size:15px;color:#111;font-weight:normal;font-style:normal;letter-spacing:0.079px;">Brandejsův statek</div>
<svg class="b" style="left:113px;top:803.1800000000001px;" width="8" height="12" viewBox="0 0 8 12"><rect x="0" y="0.3" width="1.9" height="11.2" fill="#a3a5a6"/><path d="M2 2.6 L6.8 5.9 L2 9.2 Z" fill="#fbfbfb" stroke="#d0d3d5" stroke-width="0.6" stroke-linejoin="round"/></svg>
<svg class="b" style="left:127px;top:801.8800000000001px;" width="19" height="17" viewBox="0 0 19 17"><defs><linearGradient id="hg" x1="0" y1="0" x2="1" y2="0"><stop offset="0" stop-color="#b8e860"/><stop offset="0.5" stop-color="#86d010"/><stop offset="1" stop-color="#78c800"/></linearGradient></defs><rect x="12.6" y="0.2" width="2.6" height="5.5" rx="0.6" fill="#707070"/><path d="M1.6 8.8 L9.2 2.6 L16.8 8.8 V16.2 H1.6 Z" fill="url(#hg)"/><ellipse cx="4.6" cy="13.6" rx="2.6" ry="2.2" fill="#e4f8b0" opacity="0.8"/><path d="M1.2 8.6 L9.2 1.8 L17.6 8.6" fill="none" stroke="#6c6c6c" stroke-width="3.4" stroke-linejoin="round" stroke-linecap="round"/><rect x="7.9" y="9.6" width="2.8" height="6.6" rx="1.2" fill="#4a4a4a"/></svg>
<div class="t" style="left:150px;top:804.48px;font-size:15px;color:#111;font-weight:normal;font-style:normal;letter-spacing:0.104px;">Buňky - pokusná pole</div>
<svg class="b" style="left:113px;top:831.07px;" width="8" height="12" viewBox="0 0 8 12"><rect x="0" y="0.3" width="1.9" height="11.2" fill="#a3a5a6"/><path d="M2 2.6 L6.8 5.9 L2 9.2 Z" fill="#fbfbfb" stroke="#d0d3d5" stroke-width="0.6" stroke-linejoin="round"/></svg>
<svg class="b" style="left:127px;top:829.7700000000001px;" width="19" height="17" viewBox="0 0 19 17"><defs><linearGradient id="hg" x1="0" y1="0" x2="1" y2="0"><stop offset="0" stop-color="#b8e860"/><stop offset="0.5" stop-color="#86d010"/><stop offset="1" stop-color="#78c800"/></linearGradient></defs><rect x="12.6" y="0.2" width="2.6" height="5.5" rx="0.6" fill="#707070"/><path d="M1.6 8.8 L9.2 2.6 L16.8 8.8 V16.2 H1.6 Z" fill="url(#hg)"/><ellipse cx="4.6" cy="13.6" rx="2.6" ry="2.2" fill="#e4f8b0" opacity="0.8"/><path d="M1.2 8.6 L9.2 1.8 L17.6 8.6" fill="none" stroke="#6c6c6c" stroke-width="3.4" stroke-linejoin="round" stroke-linecap="round"/><rect x="7.9" y="9.6" width="2.8" height="6.6" rx="1.2" fill="#4a4a4a"/></svg>
<div class="t" style="left:150px;top:832.37px;font-size:15px;color:#111;font-weight:normal;font-style:normal;letter-spacing:-0.110px;">Byt Výhledy</div>
<svg class="b" style="left:113px;top:858.96px;" width="8" height="12" viewBox="0 0 8 12"><rect x="0" y="0.3" width="1.9" height="11.2" fill="#a3a5a6"/><path d="M2 2.6 L6.8 5.9 L2 9.2 Z" fill="#fbfbfb" stroke="#d0d3d5" stroke-width="0.6" stroke-linejoin="round"/></svg>
<svg class="b" style="left:127px;top:857.6600000000001px;" width="19" height="17" viewBox="0 0 19 17"><defs><linearGradient id="hg" x1="0" y1="0" x2="1" y2="0"><stop offset="0" stop-color="#b8e860"/><stop offset="0.5" stop-color="#86d010"/><stop offset="1" stop-color="#78c800"/></linearGradient></defs><rect x="12.6" y="0.2" width="2.6" height="5.5" rx="0.6" fill="#707070"/><path d="M1.6 8.8 L9.2 2.6 L16.8 8.8 V16.2 H1.6 Z" fill="url(#hg)"/><ellipse cx="4.6" cy="13.6" rx="2.6" ry="2.2" fill="#e4f8b0" opacity="0.8"/><path d="M1.2 8.6 L9.2 1.8 L17.6 8.6" fill="none" stroke="#6c6c6c" stroke-width="3.4" stroke-linejoin="round" stroke-linecap="round"/><rect x="7.9" y="9.6" width="2.8" height="6.6" rx="1.2" fill="#4a4a4a"/></svg>
<div class="t" style="left:150px;top:860.26px;font-size:15px;color:#111;font-weight:normal;font-style:normal;letter-spacing:-0.300px;">Byty Sedlec</div>
<svg class="b" style="left:113px;top:886.85px;" width="8" height="12" viewBox="0 0 8 12"><rect x="0" y="0.3" width="1.9" height="11.2" fill="#a3a5a6"/><path d="M2 2.6 L6.8 5.9 L2 9.2 Z" fill="#fbfbfb" stroke="#d0d3d5" stroke-width="0.6" stroke-linejoin="round"/></svg>
<svg class="b" style="left:127px;top:885.5500000000001px;" width="19" height="17" viewBox="0 0 19 17"><defs><linearGradient id="hg" x1="0" y1="0" x2="1" y2="0"><stop offset="0" stop-color="#b8e860"/><stop offset="0.5" stop-color="#86d010"/><stop offset="1" stop-color="#78c800"/></linearGradient></defs><rect x="12.6" y="0.2" width="2.6" height="5.5" rx="0.6" fill="#707070"/><path d="M1.6 8.8 L9.2 2.6 L16.8 8.8 V16.2 H1.6 Z" fill="url(#hg)"/><ellipse cx="4.6" cy="13.6" rx="2.6" ry="2.2" fill="#e4f8b0" opacity="0.8"/><path d="M1.2 8.6 L9.2 1.8 L17.6 8.6" fill="none" stroke="#6c6c6c" stroke-width="3.4" stroke-linejoin="round" stroke-linecap="round"/><rect x="7.9" y="9.6" width="2.8" height="6.6" rx="1.2" fill="#4a4a4a"/></svg>
<div class="t" style="left:150px;top:888.15px;font-size:15px;color:#111;font-weight:normal;font-style:normal;letter-spacing:0.120px;">Centrum pro výzkum a chování psů</div>
<svg class="b" style="left:113px;top:914.74px;" width="8" height="12" viewBox="0 0 8 12"><rect x="0" y="0.3" width="1.9" height="11.2" fill="#a3a5a6"/><path d="M2 2.6 L6.8 5.9 L2 9.2 Z" fill="#fbfbfb" stroke="#d0d3d5" stroke-width="0.6" stroke-linejoin="round"/></svg>
<svg class="b" style="left:127px;top:913.44px;" width="19" height="17" viewBox="0 0 19 17"><defs><linearGradient id="hg" x1="0" y1="0" x2="1" y2="0"><stop offset="0" stop-color="#b8e860"/><stop offset="0.5" stop-color="#86d010"/><stop offset="1" stop-color="#78c800"/></linearGradient></defs><rect x="12.6" y="0.2" width="2.6" height="5.5" rx="0.6" fill="#707070"/><path d="M1.6 8.8 L9.2 2.6 L16.8 8.8 V16.2 H1.6 Z" fill="url(#hg)"/><ellipse cx="4.6" cy="13.6" rx="2.6" ry="2.2" fill="#e4f8b0" opacity="0.8"/><path d="M1.2 8.6 L9.2 1.8 L17.6 8.6" fill="none" stroke="#6c6c6c" stroke-width="3.4" stroke-linejoin="round" stroke-linecap="round"/><rect x="7.9" y="9.6" width="2.8" height="6.6" rx="1.2" fill="#4a4a4a"/></svg>
<div class="t" style="left:150px;top:916.04px;font-size:15px;color:#111;font-weight:normal;font-style:normal;letter-spacing:0.208px;">Energocetrum</div>
<svg class="b" style="left:113px;top:942.63px;" width="8" height="12" viewBox="0 0 8 12"><rect x="0" y="0.3" width="1.9" height="11.2" fill="#a3a5a6"/><path d="M2 2.6 L6.8 5.9 L2 9.2 Z" fill="#fbfbfb" stroke="#d0d3d5" stroke-width="0.6" stroke-linejoin="round"/></svg>
<svg class="b" style="left:127px;top:941.33px;" width="19" height="17" viewBox="0 0 19 17"><defs><linearGradient id="hg" x1="0" y1="0" x2="1" y2="0"><stop offset="0" stop-color="#b8e860"/><stop offset="0.5" stop-color="#86d010"/><stop offset="1" stop-color="#78c800"/></linearGradient></defs><rect x="12.6" y="0.2" width="2.6" height="5.5" rx="0.6" fill="#707070"/><path d="M1.6 8.8 L9.2 2.6 L16.8 8.8 V16.2 H1.6 Z" fill="url(#hg)"/><ellipse cx="4.6" cy="13.6" rx="2.6" ry="2.2" fill="#e4f8b0" opacity="0.8"/><path d="M1.2 8.6 L9.2 1.8 L17.6 8.6" fill="none" stroke="#6c6c6c" stroke-width="3.4" stroke-linejoin="round" stroke-linecap="round"/><rect x="7.9" y="9.6" width="2.8" height="6.6" rx="1.2" fill="#4a4a4a"/></svg>
<div class="t" style="left:150px;top:943.93px;font-size:15px;color:#111;font-weight:normal;font-style:normal;letter-spacing:-0.079px;">FAPPZ - Hala na pokusném poli</div>
<svg class="b" style="left:113px;top:970.5200000000001px;" width="8" height="12" viewBox="0 0 8 12"><rect x="0" y="0.3" width="1.9" height="11.2" fill="#a3a5a6"/><path d="M2 2.6 L6.8 5.9 L2 9.2 Z" fill="#fbfbfb" stroke="#d0d3d5" stroke-width="0.6" stroke-linejoin="round"/></svg>
<svg class="b" style="left:127px;top:969.2200000000001px;" width="19" height="17" viewBox="0 0 19 17"><defs><linearGradient id="hg" x1="0" y1="0" x2="1" y2="0"><stop offset="0" stop-color="#b8e860"/><stop offset="0.5" stop-color="#86d010"/><stop offset="1" stop-color="#78c800"/></linearGradient></defs><rect x="12.6" y="0.2" width="2.6" height="5.5" rx="0.6" fill="#707070"/><path d="M1.6 8.8 L9.2 2.6 L16.8 8.8 V16.2 H1.6 Z" fill="url(#hg)"/><ellipse cx="4.6" cy="13.6" rx="2.6" ry="2.2" fill="#e4f8b0" opacity="0.8"/><path d="M1.2 8.6 L9.2 1.8 L17.6 8.6" fill="none" stroke="#6c6c6c" stroke-width="3.4" stroke-linejoin="round" stroke-linecap="round"/><rect x="7.9" y="9.6" width="2.8" height="6.6" rx="1.2" fill="#4a4a4a"/></svg>
<div class="t" style="left:150px;top:971.82px;font-size:15px;color:#111;font-weight:normal;font-style:normal;letter-spacing:-0.250px;">FAPPZ - hlavní budova</div>
<svg class="b" style="left:113px;top:998.4100000000001px;" width="8" height="12" viewBox="0 0 8 12"><rect x="0" y="0.3" width="1.9" height="11.2" fill="#a3a5a6"/><path d="M2 2.6 L6.8 5.9 L2 9.2 Z" fill="#fbfbfb" stroke="#d0d3d5" stroke-width="0.6" stroke-linejoin="round"/></svg>
<svg class="b" style="left:127px;top:997.1100000000001px;" width="19" height="17" viewBox="0 0 19 17"><defs><linearGradient id="hg" x1="0" y1="0" x2="1" y2="0"><stop offset="0" stop-color="#b8e860"/><stop offset="0.5" stop-color="#86d010"/><stop offset="1" stop-color="#78c800"/></linearGradient></defs><rect x="12.6" y="0.2" width="2.6" height="5.5" rx="0.6" fill="#707070"/><path d="M1.6 8.8 L9.2 2.6 L16.8 8.8 V16.2 H1.6 Z" fill="url(#hg)"/><ellipse cx="4.6" cy="13.6" rx="2.6" ry="2.2" fill="#e4f8b0" opacity="0.8"/><path d="M1.2 8.6 L9.2 1.8 L17.6 8.6" fill="none" stroke="#6c6c6c" stroke-width="3.4" stroke-linejoin="round" stroke-linecap="round"/><rect x="7.9" y="9.6" width="2.8" height="6.6" rx="1.2" fill="#4a4a4a"/></svg>
<div class="t" style="left:150px;top:999.71px;font-size:15px;color:#111;font-weight:normal;font-style:normal;letter-spacing:-0.340px;">FAPPZ - pavilon B</div>
<svg class="b" style="left:113px;top:1026.3px;" width="8" height="12" viewBox="0 0 8 12"><rect x="0" y="0.3" width="1.9" height="11.2" fill="#a3a5a6"/><path d="M2 2.6 L6.8 5.9 L2 9.2 Z" fill="#fbfbfb" stroke="#d0d3d5" stroke-width="0.6" stroke-linejoin="round"/></svg>
<svg class="b" style="left:127px;top:1025.0px;" width="19" height="17" viewBox="0 0 19 17"><defs><linearGradient id="hg" x1="0" y1="0" x2="1" y2="0"><stop offset="0" stop-color="#b8e860"/><stop offset="0.5" stop-color="#86d010"/><stop offset="1" stop-color="#78c800"/></linearGradient></defs><rect x="12.6" y="0.2" width="2.6" height="5.5" rx="0.6" fill="#707070"/><path d="M1.6 8.8 L9.2 2.6 L16.8 8.8 V16.2 H1.6 Z" fill="url(#hg)"/><ellipse cx="4.6" cy="13.6" rx="2.6" ry="2.2" fill="#e4f8b0" opacity="0.8"/><path d="M1.2 8.6 L9.2 1.8 L17.6 8.6" fill="none" stroke="#6c6c6c" stroke-width="3.4" stroke-linejoin="round" stroke-linecap="round"/><rect x="7.9" y="9.6" width="2.8" height="6.6" rx="1.2" fill="#4a4a4a"/></svg>
<div class="t" style="left:150px;top:1027.60px;font-size:15px;color:#111;font-weight:normal;font-style:normal;letter-spacing:-0.481px;">FAPPZ - pavilon C (KVD)</div>
<svg class="b" style="left:113px;top:1054.19px;" width="8" height="12" viewBox="0 0 8 12"><rect x="0" y="0.3" width="1.9" height="11.2" fill="#a3a5a6"/><path d="M2 2.6 L6.8 5.9 L2 9.2 Z" fill="#fbfbfb" stroke="#d0d3d5" stroke-width="0.6" stroke-linejoin="round"/></svg>
<svg class="b" style="left:127px;top:1052.89px;" width="19" height="17" viewBox="0 0 19 17"><defs><linearGradient id="hg" x1="0" y1="0" x2="1" y2="0"><stop offset="0" stop-color="#b8e860"/><stop offset="0.5" stop-color="#86d010"/><stop offset="1" stop-color="#78c800"/></linearGradient></defs><rect x="12.6" y="0.2" width="2.6" height="5.5" rx="0.6" fill="#707070"/><path d="M1.6 8.8 L9.2 2.6 L16.8 8.8 V16.2 H1.6 Z" fill="url(#hg)"/><ellipse cx="4.6" cy="13.6" rx="2.6" ry="2.2" fill="#e4f8b0" opacity="0.8"/><path d="M1.2 8.6 L9.2 1.8 L17.6 8.6" fill="none" stroke="#6c6c6c" stroke-width="3.4" stroke-linejoin="round" stroke-linecap="round"/><rect x="7.9" y="9.6" width="2.8" height="6.6" rx="1.2" fill="#4a4a4a"/></svg>
<div class="t" style="left:150px;top:1055.49px;font-size:15px;color:#111;font-weight:normal;font-style:normal;letter-spacing:-0.483px;">FAPPZ - pavilon D (LRE)</div>
<svg class="b" style="left:113px;top:1082.08px;" width="8" height="12" viewBox="0 0 8 12"><rect x="0" y="0.3" width="1.9" height="11.2" fill="#a3a5a6"/><path d="M2 2.6 L6.8 5.9 L2 9.2 Z" fill="#fbfbfb" stroke="#d0d3d5" stroke-width="0.6" stroke-linejoin="round"/></svg>
<svg class="b" style="left:127px;top:1080.78px;" width="19" height="17" viewBox="0 0 19 17"><defs><linearGradient id="hg" x1="0" y1="0" x2="1" y2="0"><stop offset="0" stop-color="#b8e860"/><stop offset="0.5" stop-color="#86d010"/><stop offset="1" stop-color="#78c800"/></linearGradient></defs><rect x="12.6" y="0.2" width="2.6" height="5.5" rx="0.6" fill="#707070"/><path d="M1.6 8.8 L9.2 2.6 L16.8 8.8 V16.2 H1.6 Z" fill="url(#hg)"/><ellipse cx="4.6" cy="13.6" rx="2.6" ry="2.2" fill="#e4f8b0" opacity="0.8"/><path d="M1.2 8.6 L9.2 1.8 L17.6 8.6" fill="none" stroke="#6c6c6c" stroke-width="3.4" stroke-linejoin="round" stroke-linecap="round"/><rect x="7.9" y="9.6" width="2.8" height="6.6" rx="1.2" fill="#4a4a4a"/></svg>
<div class="t" style="left:150px;top:1083.38px;font-size:15px;color:#111;font-weight:normal;font-style:normal;letter-spacing:-0.081px;">FAPPZ - Potravinářský pavilon</div>
<svg class="b" style="left:113px;top:1109.97px;" width="8" height="12" viewBox="0 0 8 12"><rect x="0" y="0.3" width="1.9" height="11.2" fill="#a3a5a6"/><path d="M2 2.6 L6.8 5.9 L2 9.2 Z" fill="#fbfbfb" stroke="#d0d3d5" stroke-width="0.6" stroke-linejoin="round"/></svg>
<svg class="b" style="left:127px;top:1108.67px;" width="19" height="17" viewBox="0 0 19 17"><defs><linearGradient id="hg" x1="0" y1="0" x2="1" y2="0"><stop offset="0" stop-color="#b8e860"/><stop offset="0.5" stop-color="#86d010"/><stop offset="1" stop-color="#78c800"/></linearGradient></defs><rect x="12.6" y="0.2" width="2.6" height="5.5" rx="0.6" fill="#707070"/><path d="M1.6 8.8 L9.2 2.6 L16.8 8.8 V16.2 H1.6 Z" fill="url(#hg)"/><ellipse cx="4.6" cy="13.6" rx="2.6" ry="2.2" fill="#e4f8b0" opacity="0.8"/><path d="M1.2 8.6 L9.2 1.8 L17.6 8.6" fill="none" stroke="#6c6c6c" stroke-width="3.4" stroke-linejoin="round" stroke-linecap="round"/><rect x="7.9" y="9.6" width="2.8" height="6.6" rx="1.2" fill="#4a4a4a"/></svg>
<div class="t" style="left:150px;top:1111.27px;font-size:15px;color:#111;font-weight:normal;font-style:normal;letter-spacing:-0.210px;">FAPPZ - Sklad hořlavin</div>
<svg class="b" style="left:113px;top:1137.86px;" width="8" height="12" viewBox="0 0 8 12"><rect x="0" y="0.3" width="1.9" height="11.2" fill="#a3a5a6"/><path d="M2 2.6 L6.8 5.9 L2 9.2 Z" fill="#fbfbfb" stroke="#d0d3d5" stroke-width="0.6" stroke-linejoin="round"/></svg>
<svg class="b" style="left:127px;top:1136.56px;" width="19" height="17" viewBox="0 0 19 17"><defs><linearGradient id="hg" x1="0" y1="0" x2="1" y2="0"><stop offset="0" stop-color="#b8e860"/><stop offset="0.5" stop-color="#86d010"/><stop offset="1" stop-color="#78c800"/></linearGradient></defs><rect x="12.6" y="0.2" width="2.6" height="5.5" rx="0.6" fill="#707070"/><path d="M1.6 8.8 L9.2 2.6 L16.8 8.8 V16.2 H1.6 Z" fill="url(#hg)"/><ellipse cx="4.6" cy="13.6" rx="2.6" ry="2.2" fill="#e4f8b0" opacity="0.8"/><path d="M1.2 8.6 L9.2 1.8 L17.6 8.6" fill="none" stroke="#6c6c6c" stroke-width="3.4" stroke-linejoin="round" stroke-linecap="round"/><rect x="7.9" y="9.6" width="2.8" height="6.6" rx="1.2" fill="#4a4a4a"/></svg>
<div class="t" style="left:150px;top:1139.16px;font-size:15px;color:#111;font-weight:normal;font-style:normal;letter-spacing:-0.605px;">FAPPZ - Stáj</div>
<svg class="b" style="left:113px;top:1165.75px;" width="8" height="12" viewBox="0 0 8 12"><rect x="0" y="0.3" width="1.9" height="11.2" fill="#a3a5a6"/><path d="M2 2.6 L6.8 5.9 L2 9.2 Z" fill="#fbfbfb" stroke="#d0d3d5" stroke-width="0.6" stroke-linejoin="round"/></svg>
<svg class="b" style="left:127px;top:1164.45px;" width="19" height="17" viewBox="0 0 19 17"><defs><linearGradient id="hg" x1="0" y1="0" x2="1" y2="0"><stop offset="0" stop-color="#b8e860"/><stop offset="0.5" stop-color="#86d010"/><stop offset="1" stop-color="#78c800"/></linearGradient></defs><rect x="12.6" y="0.2" width="2.6" height="5.5" rx="0.6" fill="#707070"/><path d="M1.6 8.8 L9.2 2.6 L16.8 8.8 V16.2 H1.6 Z" fill="url(#hg)"/><ellipse cx="4.6" cy="13.6" rx="2.6" ry="2.2" fill="#e4f8b0" opacity="0.8"/><path d="M1.2 8.6 L9.2 1.8 L17.6 8.6" fill="none" stroke="#6c6c6c" stroke-width="3.4" stroke-linejoin="round" stroke-linecap="round"/><rect x="7.9" y="9.6" width="2.8" height="6.6" rx="1.2" fill="#4a4a4a"/></svg>
<div class="t" style="left:150px;top:1167.05px;font-size:15px;color:#111;font-weight:normal;font-style:normal;letter-spacing:-0.333px;">FAPPZ - trávník</div>
<svg class="b" style="left:113px;top:1193.6399999999999px;" width="8" height="12" viewBox="0 0 8 12"><rect x="0" y="0.3" width="1.9" height="11.2" fill="#a3a5a6"/><path d="M2 2.6 L6.8 5.9 L2 9.2 Z" fill="#fbfbfb" stroke="#d0d3d5" stroke-width="0.6" stroke-linejoin="round"/></svg>
<svg class="b" style="left:127px;top:1192.34px;" width="19" height="17" viewBox="0 0 19 17"><defs><linearGradient id="hg" x1="0" y1="0" x2="1" y2="0"><stop offset="0" stop-color="#b8e860"/><stop offset="0.5" stop-color="#86d010"/><stop offset="1" stop-color="#78c800"/></linearGradient></defs><rect x="12.6" y="0.2" width="2.6" height="5.5" rx="0.6" fill="#707070"/><path d="M1.6 8.8 L9.2 2.6 L16.8 8.8 V16.2 H1.6 Z" fill="url(#hg)"/><ellipse cx="4.6" cy="13.6" rx="2.6" ry="2.2" fill="#e4f8b0" opacity="0.8"/><path d="M1.2 8.6 L9.2 1.8 L17.6 8.6" fill="none" stroke="#6c6c6c" stroke-width="3.4" stroke-linejoin="round" stroke-linecap="round"/><rect x="7.9" y="9.6" width="2.8" height="6.6" rx="1.2" fill="#4a4a4a"/></svg>
<div class="t" style="left:150px;top:1194.94px;font-size:15px;color:#111;font-weight:normal;font-style:normal;letter-spacing:0.121px;">Fiktivní - nepřevedené místnosti</div>
<div class="t" style="left:103px;top:1227.27px;font-size:13.5px;color:#a3a6a8;font-weight:normal;font-style:normal;letter-spacing:-0.353px;">Správa</div>
<div class="b" style="left:417px;top:67px;width:99px;height:41px;background:#fff;border-radius:9px 9px 0 0"></div>
<div class="b" style="left:515.5px;top:67px;width:100.5px;height:41px;background:#fff;border-radius:9px 9px 0 0"></div>
<div class="b" style="left:616px;top:67px;width:184px;height:41px;background:#737e93;border-radius:9px 9px 0 0"></div>
<div class="b" style="left:801px;top:67px;width:168.5px;height:41px;background:#fff;border-radius:9px 9px 0 0"></div>
<div class="t" style="left:436.4px;top:82.73px;font-size:14.5px;color:#555;font-weight:normal;font-style:normal;letter-spacing:-0.069px;">Navigace</div>
<svg class="b" style="left:533px;top:78px;" width="20" height="19" viewBox="0 0 20 19"><rect x="0.5" y="0.5" width="19" height="18" fill="#fff" stroke="#cfcfcf"/><rect x="0" y="0" width="20" height="4" fill="#1f62b0"/><path d="M0 8.5H20M0 12H20M0 15.5H20M6.5 4V19M13.5 4V19" stroke="#d6d6d6" stroke-width="1"/></svg>
<div class="t" style="left:559px;top:82.73px;font-size:14.5px;color:#555;font-weight:normal;font-style:normal;letter-spacing:0.121px;">Výtah</div>
<svg class="b" style="left:633px;top:79px;" width="19" height="19" viewBox="0 0 37.5 36"><defs><linearGradient id="pzgtab" gradientUnits="userSpaceOnUse" x1="8" y1="2" x2="18" y2="36"><stop offset="0" stop-color="#36c6ff"/><stop offset="0.45" stop-color="#0a9ae6"/><stop offset="1" stop-color="#0a5fb0"/></linearGradient><mask id="pzmtab"><rect x="-2" y="-2" width="42" height="40" fill="#fff"/><circle cx="2.6" cy="20.2" r="4.7" fill="#000"/><rect x="-2" y="15.5" width="4.6" height="9.4" fill="#000"/><circle cx="14.6" cy="31" r="4.5" fill="#000"/><rect x="10.1" y="31" width="9" height="6" fill="#000"/></mask></defs><g mask="url(#pzmtab)" fill="url(#pzgtab)"><rect x="0" y="9" width="26.6" height="26"/><circle cx="14.4" cy="5.3" r="5.3"/><rect x="10.4" y="6" width="8" height="4"/><circle cx="31.9" cy="19.6" r="5.3"/><rect x="25" y="15.2" width="4" height="8.8"/></g></svg>
<div class="t" style="left:659px;top:82.73px;font-size:14.5px;color:#fff;font-weight:bold;font-style:normal;letter-spacing:0.177px;">Výtah MCEV I...</div>
<svg class="b" style="left:773px;top:81px;" width="11" height="7" viewBox="0 0 11 7"><path d="M0 0 H11 L5.5 6 Z" fill="#fff"/></svg>
<svg class="b" style="left:818px;top:79px;" width="19" height="19" viewBox="0 0 37.5 36"><defs><linearGradient id="pzgtab2" gradientUnits="userSpaceOnUse" x1="8" y1="2" x2="18" y2="36"><stop offset="0" stop-color="#36c6ff"/><stop offset="0.45" stop-color="#0a9ae6"/><stop offset="1" stop-color="#0a5fb0"/></linearGradient><mask id="pzmtab2"><rect x="-2" y="-2" width="42" height="40" fill="#fff"/><circle cx="2.6" cy="20.2" r="4.7" fill="#000"/><rect x="-2" y="15.5" width="4.6" height="9.4" fill="#000"/><circle cx="14.6" cy="31" r="4.5" fill="#000"/><rect x="10.1" y="31" width="9" height="6" fill="#000"/></mask></defs><g mask="url(#pzmtab2)" fill="url(#pzgtab2)"><rect x="0" y="9" width="26.6" height="26"/><circle cx="14.4" cy="5.3" r="5.3"/><rect x="10.4" y="6" width="8" height="4"/><circle cx="31.9" cy="19.6" r="5.3"/><rect x="25" y="15.2" width="4" height="8.8"/></g></svg>
<div class="t" style="left:844.2px;top:82.73px;font-size:14.5px;color:#555;font-weight:normal;font-style:normal;letter-spacing:0.011px;">Kotel GEMINO...</div>
<div class="b" style="left:417px;top:107px;width:1623px;height:90.5px;background:#737e93;"></div>
<svg class="b" style="left:436.5px;top:123px;" width="38" height="38" viewBox="0 0 37.5 36"><defs><linearGradient id="pzgbig" gradientUnits="userSpaceOnUse" x1="8" y1="2" x2="18" y2="36"><stop offset="0" stop-color="#36c6ff"/><stop offset="0.45" stop-color="#0a9ae6"/><stop offset="1" stop-color="#0a5fb0"/></linearGradient><mask id="pzmbig"><rect x="-2" y="-2" width="42" height="40" fill="#fff"/><circle cx="2.6" cy="20.2" r="4.7" fill="#000"/><rect x="-2" y="15.5" width="4.6" height="9.4" fill="#000"/><circle cx="14.6" cy="31" r="4.5" fill="#000"/><rect x="10.1" y="31" width="9" height="6" fill="#000"/></mask></defs><g mask="url(#pzmbig)" fill="url(#pzgbig)"><rect x="0" y="9" width="26.6" height="26"/><circle cx="14.4" cy="5.3" r="5.3"/><rect x="10.4" y="6" width="8" height="4"/><circle cx="31.9" cy="19.6" r="5.3"/><rect x="25" y="15.2" width="4" height="8.8"/></g></svg>
<div class="t" style="left:488px;top:120.80px;font-size:15px;color:#fff;font-weight:bold;font-style:normal;letter-spacing:-0.016px;">Výtah MCEV II. - 3 výtahy - pravý</div>
<div class="t" style="left:488px;top:158.42px;font-size:12.5px;color:#eef0f3;font-weight:normal;font-style:normal;letter-spacing:0.122px;">Výtah</div>
<div class="b" style="left:417px;top:197.5px;width:1623px;height:33.5px;background:#e9eff8;"></div>
<div class="b" style="left:732.5px;top:202px;width:122.5px;height:29px;background:#fff;border-radius:6px 6px 0 0"></div>
<div class="t" style="left:430px;top:210.30px;font-size:15px;color:#4a78a8;font-weight:normal;font-style:normal;letter-spacing:0.192px;">Profil</div>
<div class="t" style="left:490.2px;top:210.30px;font-size:15px;color:#4a78a8;font-weight:normal;font-style:normal;letter-spacing:-0.147px;">Poznámky</div>
<div class="t" style="left:587.9px;top:210.30px;font-size:15px;color:#4a78a8;font-weight:normal;font-style:normal;letter-spacing:-0.118px;">Diskuze</div>
<div class="t" style="left:669.1px;top:210.30px;font-size:15px;color:#4a78a8;font-weight:normal;font-style:normal;letter-spacing:-0.081px;">Přílohy</div>
<div class="t" style="left:867.7px;top:210.30px;font-size:15px;color:#4a78a8;font-weight:normal;font-style:normal;letter-spacing:-0.021px;">Kalendář</div>
<div class="t" style="left:953.3px;top:210.30px;font-size:15px;color:#4a78a8;font-weight:normal;font-style:normal;letter-spacing:0.300px;">Historie</div>
<div class="t" style="left:745px;top:210.10px;font-size:15px;color:#111;font-weight:bold;font-style:normal;letter-spacing:-0.325px;">Souvislosti</div>
<div class="t" style="left:826px;top:202.57px;font-size:13.5px;color:#111;font-weight:bold;font-style:normal;">(5)</div>
<div class="b" style="left:417px;top:231px;width:1468px;height:1017px;background:#fff;"></div>
<div class="b" style="left:1885px;top:231px;width:155px;height:1017px;background:#e9eff9;"></div>
<div class="t" style="left:1864px;top:1251.00px;font-size:13px;color:#8a8a8a;font-weight:normal;font-style:normal;">Sitewell ™ || 20231017.001 ©</div>
<svg class="b" style="left:437px;top:249px;" width="19" height="12" viewBox="0 0 19 12"><ellipse cx="6" cy="5.6" rx="4.6" ry="3.9" fill="none" stroke="#8c8c8c" stroke-width="2.2"/><ellipse cx="12.5" cy="5.6" rx="4.6" ry="3.9" fill="none" stroke="#8c8c8c" stroke-width="2.2"/><rect x="6.3" y="4.2" width="6" height="2.6" rx="0.8" fill="#ddd" stroke="#4a4a4a" stroke-width="1.1"/></svg>
<div class="t" style="left:459.7px;top:248.30px;font-size:15px;color:#222;font-weight:normal;font-style:normal;letter-spacing:0.110px;">Přidat souvislost</div>
<div class="b" style="left:582px;top:248px;width:16px;height:16px;box-sizing:border-box;border:1.3px solid #8a8fa0;border-radius:3px;background:#fff"></div>
<div class="t" style="left:603.5px;top:249.30px;font-size:15px;color:#222;font-weight:normal;font-style:normal;letter-spacing:-0.031px;">Zrušené</div>
<div class="b" style="left:662px;top:248px;width:17px;height:17px;border-radius:3px;background:#1a6fe0"></div>
<svg class="b" style="left:664px;top:250px;" width="13" height="13" viewBox="0 0 13 13"><path d="M2.5 6.8 L5.3 9.6 L10.8 3.6" fill="none" stroke="#fff" stroke-width="2"/></svg>
<div class="t" style="left:683px;top:249.30px;font-size:15px;color:#222;font-weight:normal;font-style:normal;letter-spacing:-0.230px;">Všechny záznamy</div>
<svg class="b" style="left:812px;top:245px;" width="19" height="20" viewBox="0 0 19 20"><path d="M3 17 L4 12 L14 2 L17.5 5.5 L7.5 15.5 Z" fill="#f2f2f2" stroke="#b5b5b5" stroke-width="1.4" stroke-linejoin="round"/><path d="M4 12 L7.5 15.5" stroke="#b5b5b5" stroke-width="1.2"/></svg>
<svg class="b" style="left:855px;top:247px;" width="16" height="16" viewBox="0 0 16 16"><path d="M2 2 L14 14 M14 2 L2 14" stroke="#bdbdbd" stroke-width="3.6" stroke-linecap="round"/></svg>
<div class="t" style="left:876.4px;top:248.30px;font-size:15px;color:#aaa;font-weight:normal;font-style:normal;letter-spacing:0.152px;">Odstranit souvislost</div>
<svg class="b" style="left:1027px;top:247px;" width="17" height="16" viewBox="0 0 17 16"><path d="M2.5 2.5 L14.5 13.5 M14.5 2.5 L2.5 13.5" stroke="#f2555e" stroke-width="3.8" stroke-linecap="round"/></svg>
<div class="t" style="left:1048.6px;top:248.30px;font-size:15px;color:#222;font-weight:normal;font-style:normal;letter-spacing:0.198px;">Odstranit vše</div>
<svg class="b" style="left:1154.5px;top:246.5px;" width="17.5" height="17.5" viewBox="0 0 17.5 17.5"><defs><radialGradient id="gg2" cx="0.4" cy="0.35" r="0.7"><stop offset="0" stop-color="#8fd67a"/><stop offset="1" stop-color="#3a9a2c"/></radialGradient></defs><circle cx="8.75" cy="8.75" r="8.5" fill="url(#gg2)"/><path d="M8.75 4.5v8.5M4.5 8.75h8.5" stroke="#fff" stroke-width="2.4"/></svg>
<div class="t" style="left:1176.5px;top:248.30px;font-size:15px;color:#222;font-weight:normal;font-style:normal;letter-spacing:0.259px;">Vytvořit</div>
<svg class="b" style="left:1236.5px;top:251.3px;" width="11.5" height="11.6" viewBox="0 0 11.5 11.6"><path d="M0 0 H11.2 L5.6 11.4 Z" fill="#111"/></svg>
<svg class="b" style="left:1262px;top:246px;" width="16.5" height="17.5" viewBox="0 0 16.5 17.5"><rect x="0.8" y="0.8" width="15" height="16" rx="2.2" fill="#5b8fe3" stroke="#4a7fd6" stroke-width="1"/><rect x="3.5" y="1.5" width="9.5" height="6.2" fill="#cfe0f8"/><rect x="3" y="10.5" width="10.5" height="5.2" fill="#fff"/><circle cx="5" cy="13" r="0.9" fill="#3b6fd0"/></svg>
<div class="t" style="left:1284px;top:248.30px;font-size:15px;color:#222;font-weight:normal;font-style:normal;letter-spacing:-0.376px;">Export do CSV</div>
<div class="t" style="left:683.5px;top:287.23px;font-size:14.5px;color:#8a8a8a;font-weight:normal;font-style:normal;letter-spacing:-0.387px;">Název</div>
<div class="t" style="left:1055px;top:287.23px;font-size:14.5px;color:#8a8a8a;font-weight:normal;font-style:normal;letter-spacing:-0.001px;">Kategorie</div>
<div class="t" style="left:1178.7px;top:287.23px;font-size:14.5px;color:#8a8a8a;font-weight:normal;font-style:normal;letter-spacing:0.374px;">Podrobnosti</div>
<div class="t" style="left:1363.3px;top:287.23px;font-size:14.5px;color:#8a8a8a;font-weight:normal;font-style:normal;letter-spacing:-0.688px;">Stav</div>
<div class="t" style="left:1487.5px;top:287.23px;font-size:14.5px;color:#8a8a8a;font-weight:normal;font-style:normal;letter-spacing:-0.029px;">Popis souvislosti</div>
<div class="b" style="left:1859.5px;top:280.5px;width:19.5px;height:25px;background:#737e93;border-radius:3px"></div>
<svg class="b" style="left:1864px;top:289px;" width="11" height="7" viewBox="0 0 11 7"><path d="M0 0 H11 L5.5 6 Z" fill="#fff"/></svg>
<div class="b" style="left:424px;top:318.7px;width:211px;height:74px;background:#eef5fe;"></div>
<svg class="b" style="left:434px;top:340px;" width="30" height="13" viewBox="0 0 30 13"><rect x="1.5" y="2" width="14" height="9" rx="4.5" fill="none" stroke="#9a9a9a" stroke-width="2.6"/><rect x="14.5" y="2" width="14" height="9" rx="4.5" fill="none" stroke="#9a9a9a" stroke-width="2.6"/><path d="M8 6.5H22" stroke="#b5b5b5" stroke-width="2.6"/></svg>
<div class="t" style="left:481px;top:332.30px;font-size:15px;color:#222;font-weight:normal;font-style:normal;letter-spacing:0.063px;"><u style="text-decoration-color:#6a6a6a;text-decoration-thickness:1.4px;text-underline-offset:1px">Všechny souvislosti</u></div>
<div class="t" style="left:481px;top:360.84px;font-size:12px;color:#888;font-weight:normal;font-style:normal;">(<u style="text-decoration-color:#333">5</u>)</div>
<svg class="b" style="left:429px;top:401.5px;" width="40" height="40" viewBox="0 0 40 40"><defs><radialGradient id="tgb" cx="0.4" cy="0.35" r="0.65"><stop offset="0" stop-color="#bdbdbd"/><stop offset="1" stop-color="#3e3e3e"/></radialGradient></defs><circle cx="20" cy="20" r="19.5" fill="url(#tgb)"/><circle cx="20" cy="20" r="15" fill="#f4f4f4"/><circle cx="20" cy="20" r="12" fill="#9a2fb2"/><circle cx="20" cy="20" r="8.5" fill="#f2e6f5"/><circle cx="20" cy="20" r="5" fill="#b014d8"/></svg>
<div class="t" style="left:481px;top:408.80px;font-size:15px;color:#222;font-weight:normal;font-style:normal;letter-spacing:-0.217px;">Revize - výtahy</div>
<div class="t" style="left:481px;top:436.34px;font-size:12px;color:#888;font-weight:normal;font-style:normal;">(4)</div>
<svg class="b" style="left:429px;top:482.5px;" width="40" height="34" viewBox="0 0 40 34"><defs><radialGradient id="pgb" cx="0.4" cy="0.35" r="0.6"><stop offset="0" stop-color="#ffe08a"/><stop offset="1" stop-color="#d49a10"/></radialGradient><linearGradient id="pbd" x1="0" y1="0" x2="0" y2="1"><stop offset="0" stop-color="#e4e4e4"/><stop offset="1" stop-color="#a0a0a0"/></linearGradient></defs><path d="M1 33 Q2 22 12 20 L20 27 L28 20 Q38 22 39 33 Z" fill="url(#pgb)" style="fill:url(#pbd)"/><circle cx="20" cy="12" r="10.5" fill="url(#pgb)"/></svg>
<div class="t" style="left:481.5px;top:484.30px;font-size:15px;color:#222;font-weight:normal;font-style:normal;letter-spacing:-0.122px;">Externí, Právnická</div>
<div class="t" style="left:481.5px;top:509.30px;font-size:15px;color:#222;font-weight:normal;font-style:normal;letter-spacing:-0.157px;">osoba</div>
<div class="t" style="left:481px;top:537.84px;font-size:12px;color:#888;font-weight:normal;font-style:normal;">(1)</div>
<div class="b" style="left:642px;top:306.7px;width:1237.5px;height:85.30000000000001px;background:#f7f9fe;"></div>
<div class="b" style="left:642px;top:480.2px;width:1237.5px;height:86.50000000000006px;background:#f7f9fe;"></div>
<div class="b" style="left:642px;top:654.7px;width:1237.5px;height:87.59999999999991px;background:#f7f9fe;"></div>
<svg class="b" style="left:654.5px;top:339.5px;" width="20" height="17" viewBox="0 0 20 17"><defs><radialGradient id="pgs" cx="0.4" cy="0.35" r="0.6"><stop offset="0" stop-color="#ffe08a"/><stop offset="1" stop-color="#d49a10"/></radialGradient><linearGradient id="pbs" x1="0" y1="0" x2="0" y2="1"><stop offset="0" stop-color="#e8e8e8"/><stop offset="1" stop-color="#a8a8a8"/></linearGradient></defs><path d="M0.5 16.5 Q1 11 6 10 L10 13 L14 10 Q19 11 19.5 16.5 Z" fill="url(#pbs)"/><circle cx="10" cy="6" r="5.3" fill="url(#pgs)"/></svg>
<div class="t" style="left:694.2px;top:331.00px;font-size:15px;color:#3064a0;font-weight:bold;font-style:normal;letter-spacing:-0.055px;">ThyssenKrupp Výtahy, s.r.o.</div>
<div class="t" style="left:691px;top:351.40px;font-size:15px;color:#707070;font-weight:bold;font-style:normal;letter-spacing:0.180px;">IČ: 61507229, DPH: Ne</div>
<div class="t" style="left:1062.7px;top:321.30px;font-size:15px;color:#222;font-weight:normal;font-style:normal;letter-spacing:0.054px;">Externí,</div>
<div class="t" style="left:1062.7px;top:341.80px;font-size:15px;color:#222;font-weight:normal;font-style:normal;letter-spacing:-0.177px;">Právnická</div>
<div class="t" style="left:1062.7px;top:362.30px;font-size:15px;color:#222;font-weight:normal;font-style:normal;letter-spacing:-0.157px;">osoba</div>
<div class="t" style="left:1494px;top:342.30px;font-size:15px;color:#222;font-weight:normal;font-style:normal;letter-spacing:0.166px;">servisní firma</div>
<div class="b" style="left:1371px;top:334px;width:75px;height:30px;background:#dcfbe3;border-radius:7px"></div>
<div class="b" style="left:1381px;top:345.5px;width:7px;height:7px;border-radius:50%;background:#22c55e"></div>
<div class="t" style="left:1395.7px;top:342.30px;font-size:15px;color:#35865a;font-weight:normal;font-style:normal;letter-spacing:-0.118px;">Platný</div>
<svg class="b" style="left:654.2px;top:424.1px;" width="20" height="20" viewBox="0 0 20 20"><defs><radialGradient id="tgs" cx="0.4" cy="0.35" r="0.65"><stop offset="0" stop-color="#c8c8c8"/><stop offset="1" stop-color="#3a3a3a"/></radialGradient></defs><circle cx="10" cy="10" r="9.8" fill="url(#tgs)"/><circle cx="10" cy="10" r="7.2" fill="#efefef"/><circle cx="10" cy="10" r="5.8" fill="#9a2fb2"/><circle cx="10" cy="10" r="4" fill="#f2e6f5"/><circle cx="10" cy="10" r="2.3" fill="#b014d8"/></svg>
<div class="t" style="left:694.2px;top:408.40px;font-size:15px;color:#3064a0;font-weight:bold;font-style:normal;letter-spacing:0.137px;">Výtah 6080024349, MCEV II. 3 výtahy, 3-letá</div>
<div class="t" style="left:691.2px;top:428.70px;font-size:15px;color:#3064a0;font-weight:bold;font-style:normal;letter-spacing:0.013px;">odborná zkouška</div>
<div class="t" style="left:1062.6px;top:418.90px;font-size:15px;color:#222;font-weight:normal;font-style:normal;letter-spacing:-0.502px;">Revize -</div>
<div class="t" style="left:1062.6px;top:439.40px;font-size:15px;color:#222;font-weight:normal;font-style:normal;letter-spacing:0.050px;">výtahy</div>
<div class="t" style="left:1186.5px;top:428.90px;font-size:15px;color:#222;font-weight:normal;font-style:normal;letter-spacing:0.054px;">24.11.2023</div>
<div class="b" style="left:1371px;top:421.1px;width:97px;height:30px;background:#dcfbe3;border-radius:7px"></div>
<div class="b" style="left:1381px;top:432.6px;width:7px;height:7px;border-radius:50%;background:#22c55e"></div>
<div class="t" style="left:1395.7px;top:429.40px;font-size:15px;color:#35865a;font-weight:normal;font-style:normal;letter-spacing:-0.179px;">Uzavřený</div>
<svg class="b" style="left:654.2px;top:511.45000000000005px;" width="20" height="20" viewBox="0 0 20 20"><defs><radialGradient id="tgs" cx="0.4" cy="0.35" r="0.65"><stop offset="0" stop-color="#c8c8c8"/><stop offset="1" stop-color="#3a3a3a"/></radialGradient></defs><circle cx="10" cy="10" r="9.8" fill="url(#tgs)"/><circle cx="10" cy="10" r="7.2" fill="#efefef"/><circle cx="10" cy="10" r="5.8" fill="#9a2fb2"/><circle cx="10" cy="10" r="4" fill="#f2e6f5"/><circle cx="10" cy="10" r="2.3" fill="#b014d8"/></svg>
<div class="t" style="left:694.2px;top:495.75px;font-size:15px;color:#3064a0;font-weight:bold;font-style:normal;letter-spacing:0.137px;">Výtah 6080024349, MCEV II. 3 výtahy, 6-letá</div>
<div class="t" style="left:691.2px;top:516.05px;font-size:15px;color:#3064a0;font-weight:bold;font-style:normal;letter-spacing:-0.012px;">inspekční prohlídka</div>
<div class="t" style="left:1062.6px;top:506.25px;font-size:15px;color:#222;font-weight:normal;font-style:normal;letter-spacing:-0.502px;">Revize -</div>
<div class="t" style="left:1062.6px;top:526.75px;font-size:15px;color:#222;font-weight:normal;font-style:normal;letter-spacing:0.050px;">výtahy</div>
<div class="t" style="left:1186.5px;top:516.25px;font-size:15px;color:#222;font-weight:normal;font-style:normal;letter-spacing:0.054px;">11.12.2024</div>
<div class="b" style="left:1371px;top:508.45000000000005px;width:97px;height:30px;background:#dcfbe3;border-radius:7px"></div>
<div class="b" style="left:1381px;top:519.95px;width:7px;height:7px;border-radius:50%;background:#22c55e"></div>
<div class="t" style="left:1395.7px;top:516.75px;font-size:15px;color:#35865a;font-weight:normal;font-style:normal;letter-spacing:-0.179px;">Uzavřený</div>
<svg class="b" style="left:654.2px;top:598.7px;" width="20" height="20" viewBox="0 0 20 20"><defs><radialGradient id="tgs" cx="0.4" cy="0.35" r="0.65"><stop offset="0" stop-color="#c8c8c8"/><stop offset="1" stop-color="#3a3a3a"/></radialGradient></defs><circle cx="10" cy="10" r="9.8" fill="url(#tgs)"/><circle cx="10" cy="10" r="7.2" fill="#efefef"/><circle cx="10" cy="10" r="5.8" fill="#9a2fb2"/><circle cx="10" cy="10" r="4" fill="#f2e6f5"/><circle cx="10" cy="10" r="2.3" fill="#b014d8"/></svg>
<div class="t" style="left:694.2px;top:583.00px;font-size:15px;color:#3064a0;font-weight:bold;font-style:normal;letter-spacing:0.137px;">Výtah 6080024349, MCEV II. 3 výtahy, 3-letá</div>
<div class="t" style="left:691.2px;top:603.30px;font-size:15px;color:#3064a0;font-weight:bold;font-style:normal;letter-spacing:0.013px;">odborná zkouška</div>
<div class="t" style="left:1062.6px;top:593.50px;font-size:15px;color:#222;font-weight:normal;font-style:normal;letter-spacing:-0.502px;">Revize -</div>
<div class="t" style="left:1062.6px;top:614.00px;font-size:15px;color:#222;font-weight:normal;font-style:normal;letter-spacing:0.050px;">výtahy</div>
<div class="t" style="left:1186.5px;top:603.50px;font-size:15px;color:#222;font-weight:normal;font-style:normal;letter-spacing:0.054px;">15.11.2026</div>
<div class="b" style="left:1371px;top:595.7px;width:68px;height:30px;background:#fde2e2;border-radius:7px"></div>
<div class="b" style="left:1381px;top:607.2px;width:7px;height:7px;border-radius:50%;background:#ef4444"></div>
<div class="t" style="left:1395.7px;top:604.00px;font-size:15px;color:#a83232;font-weight:normal;font-style:normal;letter-spacing:-0.325px;">Nový</div>
<svg class="b" style="left:654.2px;top:686.5px;" width="20" height="20" viewBox="0 0 20 20"><defs><radialGradient id="tgs" cx="0.4" cy="0.35" r="0.65"><stop offset="0" stop-color="#c8c8c8"/><stop offset="1" stop-color="#3a3a3a"/></radialGradient></defs><circle cx="10" cy="10" r="9.8" fill="url(#tgs)"/><circle cx="10" cy="10" r="7.2" fill="#efefef"/><circle cx="10" cy="10" r="5.8" fill="#9a2fb2"/><circle cx="10" cy="10" r="4" fill="#f2e6f5"/><circle cx="10" cy="10" r="2.3" fill="#b014d8"/></svg>
<div class="t" style="left:694.2px;top:670.80px;font-size:15px;color:#3064a0;font-weight:bold;font-style:normal;letter-spacing:0.137px;">Výtah 6080024349, MCEV II. 3 výtahy, 6-letá</div>
<div class="t" style="left:691.2px;top:691.10px;font-size:15px;color:#3064a0;font-weight:bold;font-style:normal;letter-spacing:-0.012px;">inspekční prohlídka</div>
<div class="t" style="left:1062.6px;top:681.30px;font-size:15px;color:#222;font-weight:normal;font-style:normal;letter-spacing:-0.502px;">Revize -</div>
<div class="t" style="left:1062.6px;top:701.80px;font-size:15px;color:#222;font-weight:normal;font-style:normal;letter-spacing:0.050px;">výtahy</div>
<div class="t" style="left:1186.5px;top:691.30px;font-size:15px;color:#222;font-weight:normal;font-style:normal;letter-spacing:-0.070px;">14.10.2030</div>
<div class="b" style="left:1371px;top:683.5px;width:68px;height:30px;background:#fde2e2;border-radius:7px"></div>
<div class="b" style="left:1381px;top:695.0px;width:7px;height:7px;border-radius:50%;background:#ef4444"></div>
<div class="t" style="left:1395.7px;top:691.80px;font-size:15px;color:#a83232;font-weight:normal;font-style:normal;letter-spacing:-0.325px;">Nový</div>
<div class="b" style="left:1894px;top:230.8px;width:146px;height:66.5px;background:#383a5a;border-radius:9px 0 0 9px"></div>
<div class="b" style="left:1894px;top:328.5px;width:146px;height:66.2px;background:#383a5a;border-radius:9px 0 0 9px"></div>
<div class="b" style="left:1894px;top:425.8px;width:146px;height:66px;background:#383a5a;border-radius:9px 0 0 9px"></div>
<div class="b" style="left:1894px;top:497.3px;width:146px;height:66.2px;background:#383a5a;border-radius:9px 0 0 9px"></div>
<svg class="b" style="left:1909px;top:255px;" width="20" height="20" viewBox="0 0 20 20"><defs><linearGradient id="pen" x1="0" y1="0" x2="1" y2="1"><stop offset="0" stop-color="#ffe28a"/><stop offset="1" stop-color="#e0a020"/></linearGradient></defs><path d="M2 18 L3.5 12.5 L14 2 L18 6 L7.5 16.5 Z" fill="url(#pen)" stroke="#b07a10" stroke-width="1"/><path d="M2 18 L3.5 12.5 L7.5 16.5 Z" fill="#f5d9a8"/></svg>
<div class="t" style="left:1933.5px;top:257.88px;font-size:15.5px;color:#e8e8ee;font-weight:normal;font-style:normal;letter-spacing:-0.098px;">Upravit</div>
<svg class="b" style="left:1910px;top:353px;" width="18" height="17" viewBox="0 0 18 17"><path d="M3 3 L15 14 M15 3 L3 14" stroke="#f2555e" stroke-width="4" stroke-linecap="round"/></svg>
<div class="t" style="left:1933px;top:354.88px;font-size:15.5px;color:#e8e8ee;font-weight:normal;font-style:normal;letter-spacing:0.015px;">Odstranit</div>
<div class="t" style="left:1894px;top:439px;width:152px;text-align:center;font-size:15px;line-height:20.3px;color:#e8e8ee;white-space:normal">Vytvořit další<br>záznam</div>
<svg class="b" style="left:1909px;top:522px;" width="21" height="19" viewBox="0 0 21 19"><defs><linearGradient id="rf1" x1="0" y1="0" x2="1" y2="0"><stop offset="0" stop-color="#84e868"/><stop offset="1" stop-color="#5cc040"/></linearGradient><linearGradient id="rf2" x1="0" y1="0" x2="1" y2="1"><stop offset="0" stop-color="#4cbc28"/><stop offset="1" stop-color="#1e8c10"/></linearGradient></defs><path d="M4.6 9.5 A5.6 5.6 0 0 1 15.6 7.6" fill="none" stroke="url(#rf1)" stroke-width="3.2"/><path d="M0.6 0.8 L8.6 10.8 H0.2 Z" fill="#80e060"/><path d="M3.4 10.8 A6.4 6.4 0 0 0 15.2 12.6" fill="none" stroke="url(#rf2)" stroke-width="3.2"/><path d="M11.4 7.8 H20 V16.8 Z" fill="#2c9a18"/></svg>
</body></html>
